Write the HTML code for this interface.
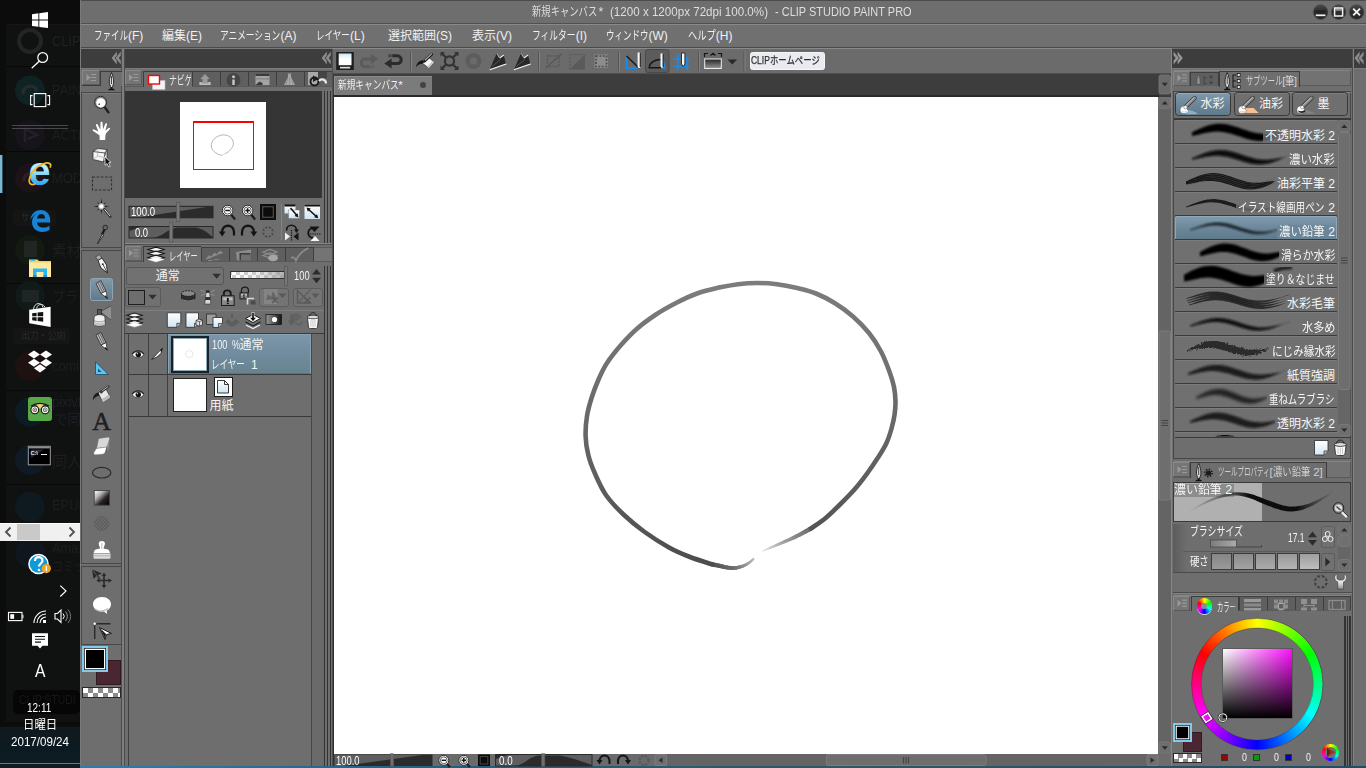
<!DOCTYPE html>
<html lang="ja"><head><meta charset="utf-8"><title>CLIP STUDIO PAINT PRO</title>
<style>
html,body{margin:0;padding:0}
body{width:1366px;height:768px;overflow:hidden;position:relative;background:#6e6e6e;font-family:"Liberation Sans","Noto Sans CJK JP",sans-serif;}
.a{position:absolute;box-sizing:border-box}
.t{white-space:nowrap}
span.j{display:inline-block;white-space:nowrap;transform-origin:0 0;font-family:"Liberation Sans","Noto Sans CJK JP",sans-serif}
svg{overflow:visible}
</style></head>
<body>
<div class="a" style="left:80px;top:0px;width:1286px;height:766px;background:#6e6e6e;"></div>
<div class="a" style="left:80px;top:766px;width:1286px;height:2px;background:linear-gradient(90deg,#2a7fb0,#1d5f80 30%,#2a5a66 60%,#1b4f6a);"></div>
<div class="a" style="left:80px;top:0px;width:1286px;height:1px;background:#4c4c4c;"></div>
<div class="a" style="left:80px;top:23px;width:1286px;height:1px;background:#505050;"></div>
<div class="a" style="left:80px;top:24px;width:1286px;height:1px;background:#8a8a8a;"></div>
<div class="a" style="left:80px;top:25px;width:1286px;height:22px;background:#707070;"></div>
<div class="a" style="left:80px;top:47px;width:1286px;height:1px;background:#4a4a4a;"></div>
<div class="a" style="left:80px;top:0px;width:1px;height:766px;background:#7a7a7a;"></div>
<div class="a" style="left:0px;top:0px;width:80px;height:768px;background:#0c0c0c;"></div>
<div class="a" style="left:6px;top:24px;width:74px;height:698px;background:#101111;"></div>
<div class="a" style="left:0px;top:727px;width:80px;height:41px;background:linear-gradient(180deg,#101a1f,#0c1a22 60%,#0e1c24);"></div>
<div class="a" style="left:6px;top:24px;width:74px;height:1px;background:#171717;"></div>
<div class="a" style="left:6px;top:66px;width:74px;height:1px;background:#080808;"></div>
<div class="a" style="left:6px;top:151px;width:74px;height:1px;background:#080808;"></div>
<div class="a" style="left:6px;top:283px;width:74px;height:1px;background:#080808;"></div>
<div class="a" style="left:6px;top:390px;width:74px;height:1px;background:#080808;"></div>
<div class="a" style="left:6px;top:484px;width:74px;height:1px;background:#080808;"></div>
<svg class="a" style="left:0px;top:0px;" width="80" height="768" viewBox="0 0 80 768"><circle cx="30" cy="41" r="11" fill="none" stroke="#242424" stroke-width="4"/><circle cx="30" cy="90.5" r="15" fill="#0f2224"/><path d="M23 93c0-8 12-9 13-3" fill="none" stroke="#262c2c" stroke-width="3.5" stroke-linecap="round"/><circle cx="30" cy="135" r="15" fill="#17141c"/><path d="M25 142v-13l12 6-9 4" fill="none" stroke="#242228" stroke-width="2.5"/><circle cx="30" cy="178" r="15" fill="#1d1218"/><path d="M24 180c0-8 12-9 13-3" fill="none" stroke="#2a2024" stroke-width="3.5" stroke-linecap="round"/><rect x="13" y="210" width="43" height="16" rx="3" fill="#151515"/><circle cx="30" cy="250" r="15" fill="#121a12"/><rect x="24" y="241" width="13" height="16" fill="#222622"/><circle cx="30" cy="296" r="15" fill="#101a18"/><rect x="22" y="290" width="17" height="12" fill="#1f2424"/><rect x="13" y="328" width="57" height="16" rx="3" fill="#151515"/><circle cx="30" cy="366" r="15" fill="#1e1210"/><circle cx="30" cy="412" r="15" fill="#0c1c22"/><circle cx="30" cy="460" r="15" fill="#101a24"/><circle cx="30" cy="507" r="15" fill="#0f1a20"/><circle cx="30" cy="553" r="15" fill="#10161e"/><rect x="13" y="690" width="67" height="24" rx="5" fill="#060606"/></svg>
<div class="a" style="left:52px;top:33px;width:28px;height:17px;overflow:hidden;"><div class="a t" style="left:0px;top:0px;font-size:15px;line-height:15px;height:15px;color:#1f2225;transform:scaleX(.86);transform-origin:0 0;">CLIP S</div></div>
<div class="a" style="left:52px;top:82px;width:28px;height:17px;overflow:hidden;"><div class="a t" style="left:0px;top:0px;font-size:15px;line-height:15px;height:15px;color:#1e1e1e;transform:scaleX(.86);transform-origin:0 0;">PAINT</div></div>
<div class="a" style="left:52px;top:127px;width:28px;height:17px;overflow:hidden;"><div class="a t" style="left:0px;top:0px;font-size:15px;line-height:15px;height:15px;color:#1e1e20;transform:scaleX(.86);transform-origin:0 0;">ACTIC</div></div>
<div class="a" style="left:52px;top:170px;width:28px;height:17px;overflow:hidden;"><div class="a t" style="left:0px;top:0px;font-size:15px;line-height:15px;height:15px;color:#1f1f1f;transform:scaleX(.86);transform-origin:0 0;">MOD</div></div>
<div class="a" style="left:52px;top:358px;width:28px;height:17px;overflow:hidden;"><div class="a t" style="left:0px;top:0px;font-size:15px;line-height:15px;height:15px;color:#1d1f22;transform:scaleX(.86);transform-origin:0 0;">comic</div></div>
<div class="a" style="left:52px;top:394px;width:28px;height:17px;overflow:hidden;"><div class="a t" style="left:0px;top:0px;font-size:15px;line-height:15px;height:15px;color:#1d2126;transform:scaleX(.86);transform-origin:0 0;">pixivF</div></div>
<div class="a" style="left:52px;top:497px;width:28px;height:17px;overflow:hidden;"><div class="a t" style="left:0px;top:0px;font-size:15px;line-height:15px;height:15px;color:#1e1e1e;transform:scaleX(.86);transform-origin:0 0;">EPUB</div></div>
<div class="a" style="left:52px;top:540px;width:28px;height:17px;overflow:hidden;"><div class="a t" style="left:0px;top:0px;font-size:15px;line-height:15px;height:15px;color:#1e1e1e;transform:scaleX(.86);transform-origin:0 0;">Amaz</div></div>
<div class="a" style="left:19px;top:694px;width:61px;height:14px;overflow:hidden;"><div class="a t" style="left:0px;top:0px;font-size:12px;line-height:12px;height:12px;color:#1a1714;transform:scaleX(.86);transform-origin:0 0;">CLIP  STUDI</div></div>
<div class="a" style="left:52px;top:243px;width:28px;height:17px;overflow:hidden;"><div class="a t" style="left:0px;top:0px;font-size:15px;line-height:15px;height:15px;color:#1e1e1e;"><span class="j" style="width:45px;transform:scaleX(.9607);margin-right:-1.77px">素材を</span></div></div>
<div class="a" style="left:52px;top:289px;width:28px;height:17px;overflow:hidden;"><div class="a t" style="left:0px;top:0px;font-size:15px;line-height:15px;height:15px;color:#1e1e1e;"><span class="j" style="width:45px;transform:scaleX(.8642);margin-right:-6.11px">プラグ</span></div></div>
<div class="a" style="left:21px;top:213px;width:59px;height:12px;overflow:hidden;"><div class="a t" style="left:0px;top:0px;font-size:10px;line-height:10px;height:10px;color:#2a2a2a;"><span class="j" style="width:20px;transform:scaleX(.864);margin-right:-2.72px">サー</span></div></div>
<div class="a" style="left:21px;top:331px;width:59px;height:12px;overflow:hidden;"><div class="a t" style="left:0px;top:0px;font-size:10px;line-height:10px;height:10px;color:#2a2a2a;"><span class="j" style="width:50px;transform:scaleX(.89);margin-right:-5.5px">出力・公開</span></div></div>
<div class="a" style="left:54px;top:412px;width:26px;height:16px;overflow:hidden;"><div class="a t" style="left:0px;top:0px;font-size:14px;line-height:14px;height:14px;color:#1c2024;"><span class="j" style="width:42px;transform:scaleX(.9607);margin-right:-1.65px">で同人</span></div></div>
<div class="a" style="left:52px;top:454px;width:28px;height:17px;overflow:hidden;"><div class="a t" style="left:0px;top:0px;font-size:15px;line-height:15px;height:15px;color:#1e1e1e;"><span class="j">同人誌</span></div></div>
<div class="a" style="left:52px;top:559px;width:28px;height:16px;overflow:hidden;"><div class="a t" style="left:0px;top:0px;font-size:14px;line-height:14px;height:14px;color:#1e1e1e;"><span class="j" style="width:56px;transform:scaleX(.7854);margin-right:-12.02px">コミック</span></div></div>
<svg class="a" style="left:0px;top:0px;" width="80" height="768" viewBox="0 0 80 768"><path fill="#fff" d="M32 14.2 38.4 13.3V19.6H32ZM39.3 13.2 48 12V19.6H39.3ZM32 20.5H38.4V26.8L32 25.9ZM39.3 20.5H48V28.1L39.3 26.9Z"/><circle cx="42.7" cy="57.5" r="4.9" fill="none" stroke="#fff" stroke-width="1.2"/><path d="M39.2 61.2 32.2 67.8" stroke="#fff" stroke-width="1.3" stroke-linecap="round"/><rect x="34.2" y="93.6" width="11.6" height="13" fill="none" stroke="#fff" stroke-width="1.1"/><path d="M32.6 95.6H30.6V104.6H32.6M47.4 95.6H49.6V104.6H47.4" fill="none" stroke="#fff" stroke-width="1.1"/><rect x="12" y="125" width="56" height="1" fill="#4a484c"/><rect x="12" y="128" width="56" height="1" fill="#4a484c"/><rect x="0" y="155" width="2.4" height="38" fill="#76b9d6"/><defs><linearGradient id="ieg" x1="0" y1="0" x2="0" y2="1"><stop offset="0.45" stop-color="#b5ecff"/><stop offset=".72" stop-color="#45b8f5"/><stop offset="1" stop-color="#1579d8"/></linearGradient></defs><text x="28.5" y="185.3" font-family="Liberation Sans,sans-serif" font-weight="bold" font-size="40" fill="url(#ieg)" textLength="22" lengthAdjust="spacingAndGlyphs">e</text><path d="M50.3 167c1.5-3.6-1.8-5-6.8-3.3-6.8 2.3-13.3 9.3-14.2 16-.6 4.6 2.3 5.6 5.6 4.3" fill="none" stroke="#f0b81a" stroke-width="1.7" stroke-linecap="round"/><path fill="#1683d8" d="M30.3 220.3c.6-5.9 4.5-10.3 10.3-10.3 6 0 9.6 4.3 9.6 10.4v2.2H37c.3 3.3 2.8 5 6.2 5 2.3 0 4.5-.7 6.3-1.9v4.3c-2 1.3-4.6 1.9-7.5 1.9-6 0-10-3.8-10-9.8 0-3.8 1.9-6.8 4.8-8.4-2.6.900-5.3 3.3-6.5 6.6ZM37.1 218.5h8c0-2.6-1.3-4.5-3.9-4.5-2.3 0-3.8 1.9-4.1 4.5Z"/><path fill="#f5cf5b" d="M29 259.5h8.5l1.5 1.5H51v16H29Z"/><path fill="#ffe9a0" d="M29 262.5H51V277H29Z"/><rect x="30.3" y="259.8" width="4.5" height="1.3" fill="#3ec1f0"/><path fill="#2bb5f4" d="M33 277v-8.5h14V277h-3.5v-5h-7v5Z"/><path fill="#1b93dd" d="M33 277v-2h3.5v2ZM43.5 277v-2H47v2Z"/><path fill="#fff" d="M29.2 309.8 50.6 306.8V326.9L29.2 323.3Z"/><path d="M33.5 309c1-6.5 8-7.5 9.5-1.5M36.5 308.5c1-5 7-5.5 8.5-1" fill="none" stroke="#ddd" stroke-width="1"/><path fill="#101010" d="M32.2 313.2 36.6 312.7V316.3H32.2ZM37.6 312.6 43.2 311.9V316.3H37.6ZM32.2 317.3H36.6V320.9L32.2 320.3ZM37.6 317.3H43.2V321.8L37.6 321Z"/><path fill="#fff" d="M34 350.6 40 354.6 34 358.6 28 354.6ZM46 350.6 52 354.6 46 358.6 40 354.6ZM34 358.8 40 362.8 34 366.8 28 362.8ZM46 358.8 52 362.8 46 366.8 40 362.8ZM40 364.3 46 368.3 40 372.6 34 368.3Z"/><rect x="28" y="397" width="24" height="24" rx="3" fill="#58a847"/><path fill="#f5d27a" d="M36 404.5c2.5-1 5.5-1 8 0L40 409Z"/><path d="M31 406c5-3.5 13-3.5 18 0" fill="none" stroke="#1a1a1a" stroke-width="1.2"/><circle cx="34.8" cy="409.8" r="3.9" fill="#fff" stroke="#111" stroke-width="1.1"/><circle cx="45.2" cy="409.8" r="3.9" fill="#fff" stroke="#111" stroke-width="1.1"/><circle cx="34.8" cy="409.8" r="1.9" fill="none" stroke="#222" stroke-width=".7"/><circle cx="45.2" cy="409.8" r="1.9" fill="none" stroke="#222" stroke-width=".7"/><circle cx="34.8" cy="409.8" r=".9" fill="#e22"/><circle cx="45.2" cy="409.8" r=".9" fill="#3a3"/><rect x="28.3" y="446.3" width="22" height="18.5" fill="#000" stroke="#9a9a9a" stroke-width="1"/><rect x="28.8" y="446.8" width="21" height="1.6" fill="#8c8c9c"/><path d="M31 449.5 44 449.5 31 458Z" fill="#2a2a2a"/><text x="30.5" y="454.8" font-size="5.5" font-weight="bold" fill="#eee" font-family="Liberation Sans,sans-serif">C:\</text><rect x="41" y="454" width="6" height="1" fill="#eee"/><rect x="0" y="523" width="80" height="18" fill="#f0f0f0"/><rect x="0" y="523" width="80" height="1" fill="#fff"/><rect x="17" y="524" width="23" height="16" fill="#c9c9c9"/><path d="M10.5 527.5 6 532 10.5 536.5M69.5 527.5 74 532 69.5 536.5" fill="none" stroke="#505050" stroke-width="1.8"/><circle cx="38.5" cy="564" r="10.3" fill="#fff"/><circle cx="38.5" cy="564" r="8.8" fill="#0e9bd8"/><path d="M35 561c0-5 7.5-5 7.5-.5 0 3-3.5 3-3.5 6" fill="none" stroke="#fff" stroke-width="2.2"/><circle cx="39" cy="570" r="1.3" fill="#fff"/><circle cx="46.3" cy="568.6" r="4.6" fill="#f2a51c"/><rect x="45.7" y="566" width="1.3" height="5" fill="#fff"/><path d="M60.3 585.6 66 591 60.3 596.5" fill="none" stroke="#fff" stroke-width="1.1"/><rect x="8.5" y="612.4" width="13.5" height="8.2" fill="none" stroke="#fff" stroke-width="1.1"/><rect x="22.4" y="614.8" width="1" height="3.4" fill="#fff"/><rect x="10.3" y="614.2" width="3.8" height="4.6" fill="#fff"/><g fill="none" stroke="#fff" stroke-width="1.1"><path d="M34 623a12 12 0 0 1 12-12"/><path d="M37 623a9 9 0 0 1 9-9" /><path d="M40 623a6 6 0 0 1 6-6"/></g><rect x="43" y="620" width="3" height="3" fill="#fff"/><path d="M55 613.5h2.5l3.5-3.5v12.5l-3.5-3.5H55Z" fill="none" stroke="#fff" stroke-width="1.1"/><g fill="none" stroke-width="1"><path stroke="#fff" d="M63 613.5a4 4 0 0 1 0 5.5"/><path stroke="#999" d="M65.5 611.5a7 7 0 0 1 0 9.5"/><path stroke="#777" d="M68 609.5a10 10 0 0 1 0 13.5"/></g><path fill="#fff" d="M32 633.2H48V645.8H42.5L40 648.6 37.5 645.8H32Z"/><path d="M35 636.5H45M35 639.3H45M35 642.1H41" stroke="#111" stroke-width="1.1"/><rect x="0" y="763" width="80" height="1" fill="#6d7479"/></svg>
<div class="a t" style="left:34.5px;top:661px;font-size:19px;line-height:19px;height:19px;color:#fff;transform:scaleX(.82);transform-origin:0 0;">A</div>
<div class="a t" style="left:27px;top:702px;font-size:12px;line-height:12px;height:12px;color:#fff;transform:scaleX(0.8325);transform-origin:0 0;">12:11</div>
<div class="a t" style="left:0px;top:719px;font-size:12px;line-height:12px;height:12px;color:#fff;width:80px;text-align:center;"><span class="j" style="width:36px;transform:scaleX(.95);margin-right:-1.8px;text-align:left">日曜日</span></div>
<div class="a t" style="left:11px;top:736px;font-size:12px;line-height:12px;height:12px;color:#fff;transform:scaleX(0.9657);transform-origin:0 0;">2017/09/24</div>
<div class="a t" style="left:532px;top:6px;font-size:12px;line-height:12px;height:12px;color:#dedede;"><span class="j" style="width:84px;transform:scaleX(.7763);margin-right:-18.79px">新規キャンバス</span></div>
<div class="a t" style="left:598.5px;top:6px;font-size:12px;line-height:12px;height:12px;color:#dedede;">*</div>
<div class="a t" style="left:609.5px;top:6px;font-size:12px;line-height:12px;height:12px;color:#dedede;transform:scaleX(0.9666);transform-origin:0 0;">(1200 x 1200px 72dpi 100.0%)</div>
<div class="a t" style="left:774.5px;top:6px;font-size:12px;line-height:12px;height:12px;color:#dedede;transform:scaleX(0.9145);transform-origin:0 0;">- CLIP STUDIO PAINT PRO</div>
<svg class="a" style="left:0px;top:0px;" width="1366" height="24" viewBox="0 0 1366 24"><defs><linearGradient id="wb" x1="0" y1="0" x2="0" y2="1"><stop offset="0" stop-color="#4a4a4a"/><stop offset=".45" stop-color="#2e2e2e"/><stop offset="1" stop-color="#262626"/></linearGradient></defs><circle cx="1320.6" cy="12" r="7.4" fill="url(#wb)" stroke="#555" stroke-width=".6"/><circle cx="1338.6" cy="12" r="7.4" fill="url(#wb)" stroke="#555" stroke-width=".6"/><circle cx="1356.6" cy="12" r="7.4" fill="url(#wb)" stroke="#555" stroke-width=".6"/><path d="M1315.8 15.3H1325.4" stroke="#f2f2f2" stroke-width="1.7"/><path d="M1314.5 10.5a6.5 4 0 0 0 12.2 0Z" fill="#1c1c1c" opacity=".6"/><rect x="1334.6" y="8" width="8" height="8" fill="none" stroke="#f2f2f2" stroke-width="1.5"/><rect x="1335.4" y="8.8" width="6.4" height="2" fill="#f2f2f2" opacity=".5"/><path d="M1353.2 8.6 1360 15.4M1360 8.6 1353.2 15.4" stroke="#f2f2f2" stroke-width="1.9"/></svg>
<div class="a t" style="left:94px;top:30px;font-size:12px;line-height:12px;height:12px;color:#f0f0f0;"><span class="j" style="width:48px;transform:scaleX(.7079);margin-right:-14.02px">ファイル</span>(F)</div>
<div class="a t" style="left:162px;top:30px;font-size:12px;line-height:12px;height:12px;color:#f0f0f0;"><span class="j">編集</span>(E)</div>
<div class="a t" style="left:220px;top:30px;font-size:12px;line-height:12px;height:12px;color:#f0f0f0;"><span class="j" style="width:84px;transform:scaleX(.7212);margin-right:-23.42px">アニメーション</span>(A)</div>
<div class="a t" style="left:316px;top:30px;font-size:12px;line-height:12px;height:12px;color:#f0f0f0;"><span class="j" style="width:48px;transform:scaleX(.71);margin-right:-13.92px">レイヤー</span>(L)</div>
<div class="a t" style="left:388px;top:30px;font-size:12px;line-height:12px;height:12px;color:#f0f0f0;"><span class="j">選択範囲</span>(S)</div>
<div class="a t" style="left:472px;top:30px;font-size:12px;line-height:12px;height:12px;color:#f0f0f0;"><span class="j">表示</span>(V)</div>
<div class="a t" style="left:532px;top:30px;font-size:12px;line-height:12px;height:12px;color:#f0f0f0;"><span class="j" style="width:60px;transform:scaleX(.728);margin-right:-16.32px">フィルター</span>(I)</div>
<div class="a t" style="left:606px;top:30px;font-size:12px;line-height:12px;height:12px;color:#f0f0f0;"><span class="j" style="width:60px;transform:scaleX(.7072);margin-right:-17.57px">ウィンドウ</span>(W)</div>
<div class="a t" style="left:688px;top:30px;font-size:12px;line-height:12px;height:12px;color:#f0f0f0;"><span class="j" style="width:36px;transform:scaleX(.7708);margin-right:-8.25px">ヘルプ</span>(H)</div>
<div class="a" style="left:333px;top:48px;width:839px;height:26px;background:#6b6b6b;"></div>
<div class="a" style="left:333px;top:48px;width:839px;height:1px;background:#8a8a8a;"></div>
<div class="a" style="left:332px;top:48px;width:1px;height:26px;background:#8a8a8a;"></div>
<div class="a" style="left:333px;top:73px;width:839px;height:1px;background:#505050;"></div>
<div class="a" style="left:333px;top:74px;width:839px;height:23px;background:#3d3d3d;"></div>
<div class="a" style="left:333px;top:95px;width:826px;height:2px;background:#2a2a2a;"></div>
<div class="a" style="left:333.5px;top:76px;width:98.5px;height:19px;background:#7b7b7b;border-top:1px solid #8c8c8c;border-left:1px solid #8c8c8c;"></div>
<div class="a t" style="left:337.5px;top:79.5px;font-size:11.5px;line-height:11.5px;height:11.5px;color:#f0f0f0;"><span class="j" style="width:80.5px;transform:scaleX(.7544);margin-right:-19.77px">新規キャンバス</span>*</div>
<svg class="a" style="left:0px;top:0px;" width="1366" height="100" viewBox="0 0 1366 100"><circle cx="423" cy="85" r="3" fill="#444"/><rect x="410" y="51" width="1" height="20" fill="#555"/><rect x="411" y="51" width="1" height="20" fill="#828282"/><rect x="538" y="51" width="1" height="20" fill="#555"/><rect x="539" y="51" width="1" height="20" fill="#828282"/><rect x="618" y="51" width="1" height="20" fill="#555"/><rect x="619" y="51" width="1" height="20" fill="#828282"/><rect x="698" y="51" width="1" height="20" fill="#555"/><rect x="699" y="51" width="1" height="20" fill="#828282"/><rect x="743.5" y="51" width="1" height="20" fill="#555"/><rect x="744.5" y="51" width="1" height="20" fill="#828282"/><defs><linearGradient id="nd" x1="0" y1="0" x2="0" y2="1"><stop offset="0" stop-color="#cfe6f7"/><stop offset=".5" stop-color="#fff"/><stop offset="1" stop-color="#fff"/></linearGradient><linearGradient id="gr" x1="0" y1="0" x2="0" y2="1"><stop offset="0" stop-color="#222"/><stop offset="1" stop-color="#999"/></linearGradient></defs><rect x="336.2" y="52" width="17.6" height="18" fill="#1e1e1e"/><rect x="338.7" y="53.5" width="12.8" height="11.7" fill="url(#nd)"/><rect x="340" y="66.8" width="10.2" height="1.7" fill="#ddd"/><path d="M391 63.6H397.3a3.9 3.9 0 0 0 0-7.8H392.5" fill="none" stroke="#2b2b2b" stroke-width="3"/><path d="M384.3 63.6 391.6 58.6V68.6Z" fill="#2b2b2b"/><path d="M388.6 55.8h4" stroke="#2b2b2b" stroke-width="3" stroke-dasharray="1 .8"/><g transform="rotate(180 381.25 61.3)"><path d="M391 63.6H397.3a3.9 3.9 0 0 0 0-7.8H392.5" fill="none" stroke="#5b5b5b" stroke-width="3"/><path d="M384.3 63.6 391.6 58.6V68.6Z" fill="#5b5b5b"/><path d="M388.6 55.8h4" stroke="#5b5b5b" stroke-width="3" stroke-dasharray="1 .8"/></g><path d="M421 62 427.6 56.3 434.2 62.3 428.8 68.2Z" fill="#f6f6f6" stroke="#2a2a2a" stroke-width=".7"/><path d="M428.8 68.2 434.2 62.3 432.6 60.8 427.3 66.7Z" fill="#c8c8c8"/><path d="M422.5 60.2c-3.3.6-6.3 3-6.3 6.8 1.3-2.2 3.5-3.3 6.5-3.6l2.3-2.2Z" fill="#161616"/><path d="M424.5 61.3 431.8 54.3" stroke="#1e1e1e" stroke-width="2.6" stroke-linecap="round"/><path d="M425.3 60 431.6 54" stroke="#f2f2f2" stroke-width="1" stroke-linecap="round"/><g fill="none" stroke="#333" stroke-width="2.2"><circle cx="449.5" cy="61" r="4.6"/><path d="M441.5 53 446 57.5M457.5 53 453 57.5M441.5 69 446 64.5M457.5 69 453 64.5"/></g><path d="M440.5 52h4.5l-4.5 4.5ZM458.5 52v4.5L454 52ZM440.5 70v-4.5l4.5 4.5ZM458.5 70H454l4.5-4.5Z" fill="#333"/><circle cx="473.5" cy="61" r="5.8" fill="none" stroke="#5d5d5d" stroke-width="4.4"/><g transform="translate(0 0)"><path d="M489.8 69.2 496.8 53 499.2 57.6 503.6 54.6 505.9 63.6Z" fill="#282828"/><path d="M489.6 69.8 506.3 63.9" stroke="#f6f6f6" stroke-width="1.1"/><path d="M499.6 57.9 503.8 55" stroke="#f0f0f0" stroke-width="1.2"/><path d="M496.9 53.3 499.2 57.6" stroke="#e0e0e0" stroke-width=".7"/><path d="M492 66.5 500.5 59.5" stroke="#6a6a6a" stroke-width=".7"/></g><g transform="translate(24.3 0)"><path d="M489.8 69.2 496.8 53 499.2 57.6 503.6 54.6 505.9 63.6Z" fill="#282828"/><path d="M489.6 69.8 506.3 63.9" stroke="#f6f6f6" stroke-width="1.1"/><path d="M499.6 57.9 503.8 55" stroke="#f0f0f0" stroke-width="1.2"/><path d="M496.9 53.3 499.2 57.6" stroke="#e0e0e0" stroke-width=".7"/><path d="M492 66.5 500.5 59.5" stroke="#6a6a6a" stroke-width=".7"/></g><rect x="547.5" y="56" width="11.5" height="10.5" fill="none" stroke="#575757" stroke-width="1.3" stroke-dasharray="2 1.3"/><path d="M545.5 68 562 53.5" stroke="#575757" stroke-width="1.3"/><path d="M585 54v15.5h-15Z" fill="#5a5a5a"/><path d="M570 69.5V54.5h14" fill="none" stroke="#585858" stroke-width="1" stroke-dasharray="2 1.3"/><path d="M569 70 586 53.5" stroke="#626262" stroke-width=".8"/><rect x="594.5" y="54.5" width="13.5" height="13.5" fill="#8c8c8c"/><rect x="596" y="56" width="10.5" height="10.5" fill="none" stroke="#4c4c4c" stroke-width="1.7" stroke-dasharray="1.9 1.5"/><path d="M626.5 69V56.5" stroke="#1c8ce8" stroke-width="1.5"/><path d="M626 68.3H639" stroke="#1c8ce8" stroke-width="1.5"/><path d="M626.5 56 639.5 68.5" stroke="#1a1a1a" stroke-width="1.5"/><path d="M638.7 52.5V66.5l1 1.5" fill="none" stroke="#f8f8f8" stroke-width="2.2"/><path d="M640.3 53V67" stroke="#222" stroke-width=".9"/><rect x="645.5" y="49.5" width="23.5" height="23" rx="2.5" fill="#5c5c5c" stroke="#4a4a4a" stroke-width="1"/><path d="M661 59.5c-7 0-11.5 3.5-11.8 8.2H662" fill="none" stroke="#161616" stroke-width="1.4"/><path d="M661.5 60c2.5 1.5 3.5 4.5 3.5 8h-4" fill="none" stroke="#1c8ce8" stroke-width="1.3"/><path d="M661.6 53.5V66l.8 1.5" fill="none" stroke="#f8f8f8" stroke-width="2.2"/><path d="M663.2 54V67" stroke="#222" stroke-width=".9"/><path d="M673.5 59h16M673.5 66.5h16M678 54v16M687 56v14" stroke="#1c8ce8" stroke-width="1.5"/><path d="M681.5 53h3.4v11l-1.7 2.5-1.7-2.5Z" fill="#f8f8f8" stroke="#222" stroke-width=".9"/><rect x="704.7" y="59" width="16.6" height="9.5" fill="url(#gr)" stroke="#eee" stroke-width="1"/><path d="M704.5 57V53.5h3.5M718 53.5h3.5V57M710.5 55.5 713 53.2 715.5 55.5" fill="none" stroke="#161616" stroke-width="1.2"/><path d="M727.5 59.5h9.6l-4.8 5Z" fill="#2a2a2a"/></svg>
<div class="a" style="left:749.5px;top:51.5px;width:75.5px;height:18.5px;background:#e9ebf0;border-radius:2.5px;border:1px solid #f6f6f6;"></div>
<div class="a t" style="left:751.2px;top:55px;font-size:10.5px;line-height:10.5px;height:10.5px;color:#2e2e2e;-webkit-text-stroke:.25px #2e2e2e;transform:scaleX(0.8054);transform-origin:0 0;">CLIP</div>
<div class="a t" style="left:770.3px;top:55px;font-size:10.5px;line-height:10.5px;height:10.5px;color:#2e2e2e;"><span class="j" style="width:63px;transform:scaleX(.7967);margin-right:-12.81px;-webkit-text-stroke:.25px #2e2e2e">ホームページ</span></div>
<div class="a" style="left:334px;top:97px;width:824px;height:656.5px;background:#fff;"></div>
<div class="a" style="left:333px;top:97px;width:1px;height:669px;background:#2e2e2e;"></div>
<svg class="a" style="left:334px;top:97px;" width="824" height="656" viewBox="334 97 824 656"><defs><linearGradient id="cg" gradientUnits="userSpaceOnUse" x1="0" y1="281" x2="0" y2="568"><stop offset="0" stop-color="#7c7c7c"/><stop offset=".35" stop-color="#6e6e6e"/><stop offset=".7" stop-color="#5e5e5e"/><stop offset="1" stop-color="#4c4c4c"/></linearGradient><filter id="cb" x="-5%" y="-5%" width="110%" height="110%"><feGaussianBlur stdDeviation=".6"/></filter></defs><g fill="none" stroke-linecap="round" stroke-linejoin="round" filter="url(#cb)"><path d="M753.5 559L752.7 559.7" stroke="rgb(187,187,187)" stroke-width="2.06"/><path d="M752.7 559.7L751.6 560.7" stroke="rgb(182,182,182)" stroke-width="2.19"/><path d="M751.6 560.7L750.3 561.8" stroke="rgb(176,176,176)" stroke-width="2.33"/><path d="M750.3 561.8L748.9 562.9" stroke="rgb(171,171,171)" stroke-width="2.46"/><path d="M748.9 562.9L747.5 563.8" stroke="rgb(165,165,165)" stroke-width="2.58"/><path d="M747.5 563.8L746.1 564.6" stroke="rgb(160,160,160)" stroke-width="2.71"/><path d="M746.1 564.6L744.7 565.3" stroke="rgb(154,154,154)" stroke-width="2.84"/><path d="M744.7 565.3L743.2 566" stroke="rgb(149,149,149)" stroke-width="2.97"/><path d="M743.2 566L741.7 566.5" stroke="rgb(143,143,143)" stroke-width="3.1"/><path d="M741.7 566.5L740 567" stroke="rgb(138,138,138)" stroke-width="3.23"/><path d="M740 567L738.4 567.4" stroke="rgb(132,132,132)" stroke-width="3.36"/><path d="M738.4 567.4L736.8 567.8" stroke="rgb(127,127,127)" stroke-width="3.49"/><path d="M736.8 567.8L735 568" stroke="rgb(121,121,121)" stroke-width="3.62"/><path d="M735 568L733 568.1" stroke="rgb(116,116,116)" stroke-width="3.75"/><path d="M733 568.1L730.5 568" stroke="rgb(110,110,110)" stroke-width="3.88"/><path d="M730.5 568L727.1 567.5" stroke="rgb(105,105,105)" stroke-width="4.01"/><path d="M727.1 567.5L722.9 566.7" stroke="rgb(99,99,99)" stroke-width="4.14"/><path d="M722.9 566.7L718.5 565.7" stroke="rgb(94,94,94)" stroke-width="4.27"/><path d="M718.5 565.7L714.7 564.9" stroke="rgb(88,88,88)" stroke-width="4.4"/><path d="M714.7 564.9L712 564.3" stroke="rgb(83,83,83)" stroke-width="4.54"/><path d="M811 528.5L809 529.6" stroke="rgb(103,103,103)" stroke-width="4.51"/><path d="M809 529.6L806.1 531.2" stroke="rgb(110,110,110)" stroke-width="4.34"/><path d="M806.1 531.2L802.7 533" stroke="rgb(116,116,116)" stroke-width="4.17"/><path d="M802.7 533L799.2 534.9" stroke="rgb(123,123,123)" stroke-width="4"/><path d="M799.2 534.9L796 536.5" stroke="rgb(130,130,130)" stroke-width="3.83"/><path d="M796 536.5L792.9 538" stroke="rgb(136,136,136)" stroke-width="3.66"/><path d="M792.9 538L789.8 539.4" stroke="rgb(143,143,143)" stroke-width="3.5"/><path d="M789.8 539.4L786.6 540.8" stroke="rgb(150,150,150)" stroke-width="3.32"/><path d="M786.6 540.8L783.7 542" stroke="rgb(156,156,156)" stroke-width="3.15"/><path d="M783.7 542L781 543.2" stroke="rgb(163,163,163)" stroke-width="2.98"/><path d="M781 543.2L778.6 544.2" stroke="rgb(169,169,169)" stroke-width="2.81"/><path d="M778.6 544.2L776.5 545.1" stroke="rgb(176,176,176)" stroke-width="2.65"/><path d="M776.5 545.1L774.6 546" stroke="rgb(182,182,182)" stroke-width="2.48"/><path d="M774.6 546L772.8 546.7" stroke="rgb(189,189,189)" stroke-width="2.3"/><path d="M772.8 546.7L771 547.5" stroke="rgb(196,196,196)" stroke-width="2.14"/><path d="M771 547.5L769.1 548.3" stroke="rgb(202,202,202)" stroke-width="1.96"/><path d="M769.1 548.3L767.3 549.1" stroke="rgb(209,209,209)" stroke-width="1.8"/><path d="M767.3 549.1L765.5 549.9" stroke="rgb(216,216,216)" stroke-width="1.62"/><path d="M765.5 549.9L764.1 550.5" stroke="rgb(222,222,222)" stroke-width="1.46"/><path d="M764.1 550.5L763 551" stroke="rgb(229,229,229)" stroke-width="1.29"/><path d="M712 564.3C708.3 563.1 697.2 559.8 690 557C682.8 554.2 676.7 551.8 669 547.5C661.3 543.2 651.6 537 644 531.5C636.4 526 629.8 520.5 623.5 514.5C617.2 508.5 611 502.1 606.3 495.5C601.6 488.9 598.5 481.6 595.5 474.8C592.5 468.1 589.9 461.5 588.3 455C586.6 448.5 585.8 442.5 585.6 436C585.4 429.5 586 422.4 587 416C588 409.6 589.8 403.5 591.7 397.5C593.6 391.5 595.8 385.8 598.3 380C600.8 374.2 603.2 368.8 607 363C610.8 357.2 616 350.7 621 345C626 339.3 631.2 333.8 637 328.7C642.8 323.6 649.5 318.8 656 314.5C662.5 310.2 669.2 306.5 676 303C682.8 299.5 689.8 296.1 697 293.5C704.2 290.9 712.2 289.2 719 287.6C725.8 286.1 731.6 285 738 284.2C744.4 283.4 751.1 283 757.6 283C764.1 283 770.6 283.4 777 284.2C783.4 285 789.5 286.2 796 287.8C802.5 289.4 809.5 290.9 816 293.5C822.5 296.1 828.8 299.4 835 303.2C841.2 307 847.3 311.5 853 316.5C858.7 321.5 864.3 327.2 869 333C873.7 338.8 877.6 345.1 881 351.5C884.4 357.9 887.3 365.8 889.5 371.7C891.7 377.6 893 382 894 387C895 392 895.4 397 895.5 401.7C895.6 406.4 895.1 410.7 894.5 415C893.9 419.3 893.1 422.8 891.8 427.5C890.5 432.2 888.8 438 886.5 443C884.2 448 881.2 452.6 878 457.6C874.8 462.6 871.2 468 867.5 473C863.8 478 860.4 482.6 856 487.7C851.6 492.8 846 498.5 841 503.5C836 508.5 831 513.5 826 517.7C821 521.9 813.5 526.7 811 528.5" stroke="url(#cg)" stroke-width="4.6"/></g></svg>
<div class="a" style="left:334px;top:753.5px;width:838px;height:12.5px;background:#6a6a6a;"></div>
<svg class="a" style="left:0px;top:0px;" width="1366" height="768" viewBox="0 0 1366 768"><rect x="334.5" y="754.5" width="98" height="11.5" fill="#2b2b2b"/><path d="M335 755H422L343 766H335Z" fill="#5e5e5e"/><rect x="390.3" y="753.8" width="3.4" height="12.4" fill="#6e6e6e" stroke="#555" stroke-width=".6"/><path d="M447.1 764 449.8 767" stroke="#1c1c1c" stroke-width="2"/><circle cx="443.8" cy="760.3" r="5" fill="#fff" stroke="#2a2a2a" stroke-width="1"/><circle cx="443.8" cy="760.3" r="3.4" fill="none" stroke="#333" stroke-width=".8"/><path d="M441.6 760.3h4.4" stroke="#111" stroke-width="1.5"/><path d="M467.1 764 469.8 767" stroke="#1c1c1c" stroke-width="2"/><circle cx="463.8" cy="760.3" r="5" fill="#fff" stroke="#2a2a2a" stroke-width="1"/><circle cx="463.8" cy="760.3" r="3.4" fill="none" stroke="#333" stroke-width=".8"/><path d="M461.6 760.3h4.4" stroke="#111" stroke-width="1.5"/><path d="M463.8 758.1v4.4" stroke="#111" stroke-width="1.5"/><rect x="478" y="754.5" width="12" height="11.5" fill="#0c0c0c"/><rect x="480.2" y="756.5" width="7.6" height="7.6" fill="none" stroke="#444" stroke-width="1"/><rect x="495.5" y="754.5" width="96.5" height="11.5" fill="#5e5e5e"/><path d="M512 766c14 0 16-10.5 28-10.5h20c10 1.5 22 6 32 9.5v1Z" fill="#2b2b2b"/><path d="M496 755 508 755 496 759Z" fill="#2b2b2b"/><rect x="495.5" y="754.5" width="96.5" height="11.5" fill="none" stroke="#2b2b2b" stroke-width="1"/><rect x="541.5" y="753.8" width="3.4" height="12.4" fill="#6e6e6e" stroke="#555" stroke-width=".6"/><path d="M599.5 762.5c0-8 10-8 10 0v2.5" fill="none" stroke="#141414" stroke-width="2" transform="translate(0 -1)"/><path d="M596.5 760h6l-3 4.5Z" fill="#141414"/><path d="M628 762.5c0-8-10-8-10 0v2.5" fill="none" stroke="#141414" stroke-width="2" transform="translate(0 -1)"/><path d="M625 760h6l-3 4.5Z" fill="#141414"/><circle cx="644" cy="760.5" r="4.5" fill="none" stroke="#575757" stroke-width="2" stroke-dasharray="2.2 1.4"/><rect x="655" y="754.5" width="11.5" height="11" rx="1.5" fill="#707070" stroke="#808080" stroke-width=".8"/><path d="M662.5 757.5v5.5l-4-2.75Z" fill="#2c2c2c"/><rect x="667" y="754" width="480" height="12" fill="#646464"/><rect x="826.5" y="754.5" width="159.5" height="11" rx="2" fill="#6e6e6e" stroke="#7c7c7c" stroke-width="1"/><path d="M903.5 757v6.5M906 757v6.5M908.5 757v6.5" stroke="#444" stroke-width="1.1"/><rect x="1147" y="754.5" width="11" height="11" rx="1.5" fill="#707070" stroke="#808080" stroke-width=".8"/><path d="M1150.5 757.5v5.5l4-2.75Z" fill="#2c2c2c"/><rect x="1158.5" y="97" width="12.5" height="656" fill="#646464"/><rect x="1159" y="75" width="11.5" height="19" rx="2" fill="#6a6a6a" stroke="#7a7a7a" stroke-width=".8"/><path d="M1161.8 82.8h6l-3 3.4Z" fill="#2a2a2a"/><rect x="1159" y="97.8" width="11.5" height="10.5" rx="2" fill="#6e6e6e" stroke="#7c7c7c" stroke-width=".8"/><path d="M1161.8 104.5h6l-3-3.4Z" fill="#2a2a2a"/><rect x="1159" y="742" width="11.5" height="11" rx="2" fill="#6e6e6e" stroke="#7c7c7c" stroke-width=".8"/><path d="M1161.8 746.3h6l-3 3.4Z" fill="#2a2a2a"/><rect x="1159" y="331" width="11.5" height="169" rx="2" fill="#6e6e6e" stroke="#7c7c7c" stroke-width="1"/><path d="M1161.5 420.5h6.5M1161.5 423h6.5M1161.5 425.5h6.5" stroke="#444" stroke-width="1.1"/><rect x="1159" y="753.5" width="12" height="12.5" fill="#6c6c6c"/></svg>
<div class="a t" style="left:336px;top:754.5px;font-size:12px;line-height:12px;height:12px;color:#fff;transform:scaleX(0.7826);transform-origin:0 0;">100.0</div>
<div class="a t" style="left:498.7px;top:754.5px;font-size:12px;line-height:12px;height:12px;color:#fff;transform:scaleX(0.8153);transform-origin:0 0;">0.0</div>
<div class="a" style="left:81px;top:48px;width:251px;height:1px;background:#7a7a7a;"></div>
<div class="a" style="left:81px;top:49px;width:251px;height:19px;background:#3d3d3d;"></div>
<div class="a" style="left:81px;top:68px;width:251px;height:1px;background:#7c7c7c;"></div>
<div class="a" style="left:121px;top:49px;width:1px;height:717px;background:#4c4c4c;"></div>
<div class="a" style="left:122px;top:49px;width:2px;height:717px;background:#7e7e7e;"></div>
<div class="a" style="left:124px;top:49px;width:1px;height:717px;background:#4c4c4c;"></div>
<div class="a" style="left:82px;top:70px;width:17.5px;height:15px;background:#757575;border:1px solid #5a5a5a;border-top-color:#888;border-left-color:#888;"></div>
<div class="a" style="left:99.5px;top:71px;width:22px;height:14.5px;background:#6e6e6e;border-top:1px solid #3c3c3c;border-left:1px solid #3c3c3c;"></div>
<div class="a" style="left:82px;top:85px;width:18px;height:1px;background:#3c3c3c;"></div>
<div class="a" style="left:81px;top:91.5px;width:40.5px;height:156.5px;border:1px solid #474747;border-right:none;"></div>
<div class="a" style="left:81px;top:250px;width:40.5px;height:313.5px;border:1px solid #474747;border-right:none;"></div>
<div class="a" style="left:81px;top:565.5px;width:40.5px;height:79px;border:1px solid #474747;border-right:none;"></div>
<div class="a" style="left:82px;top:92.5px;width:39px;height:1px;background:#7a7a7a;"></div>
<div class="a" style="left:89.5px;top:277.5px;width:23.5px;height:23.5px;background:linear-gradient(180deg,#8099a9,#617b8c);border-radius:2.5px;border:1px solid #8ea5b3;"></div>
<div class="a" style="left:95.5px;top:659.5px;width:25.5px;height:25.5px;background:#4a2632;border:1px solid #2e1a20;"></div>
<div class="a" style="left:82px;top:646px;width:26px;height:26px;background:#000;border:2.3px solid #84c8ea;box-shadow:inset 0 0 0 .8px #222,inset 0 0 0 2px #fff;"></div>
<div class="a" style="left:82px;top:686.5px;width:39px;height:11px;background:#fff;border:1px solid #2a2a2a;background:repeating-conic-gradient(#8a8a8a 0 25%,#fff 0 50%) 0 0/10px 10px;"></div>
<div class="a" style="left:124.5px;top:70px;width:17.5px;height:15px;background:#757575;border:1px solid #5a5a5a;border-top-color:#888;border-left-color:#888;"></div>
<div class="a" style="left:124.5px;top:85.5px;width:207.5px;height:1px;background:#595959;"></div>
<div class="a" style="left:142.5px;top:71px;width:49px;height:15.5px;background:#6e6e6e;border-top:1px solid #3c3c3c;border-left:1px solid #3c3c3c;"></div>
<div class="a" style="left:191.5px;top:71px;width:29px;height:14.5px;background:#5f5f5f;border:1px solid #3e3e3e;border-bottom:none;"></div>
<div class="a" style="left:219.5px;top:71px;width:29px;height:14.5px;background:#5f5f5f;border:1px solid #3e3e3e;border-bottom:none;"></div>
<div class="a" style="left:247.5px;top:71px;width:29px;height:14.5px;background:#5f5f5f;border:1px solid #3e3e3e;border-bottom:none;"></div>
<div class="a" style="left:275.5px;top:71px;width:29px;height:14.5px;background:#5f5f5f;border:1px solid #3e3e3e;border-bottom:none;"></div>
<div class="a" style="left:303.5px;top:71px;width:29px;height:14.5px;background:#5f5f5f;border:1px solid #3e3e3e;border-bottom:none;"></div>
<div class="a" style="left:183px;top:74px;width:8px;height:14px;background:linear-gradient(90deg,rgba(110,110,110,0),#6e6e6e);"></div>
<div class="a" style="left:124.5px;top:91px;width:197.5px;height:107px;background:#353535;"></div>
<div class="a" style="left:180px;top:102px;width:86px;height:86px;background:#fff;"></div>
<div class="a" style="left:193px;top:121.2px;width:61.3px;height:49px;border:1.4px solid #f00;border-top-width:2px;"></div>
<div class="a" style="left:323.5px;top:91px;width:1.5px;height:152px;background:#333;"></div>
<div class="a" style="left:326.5px;top:91px;width:1.5px;height:152px;background:#333;"></div>
<div class="a" style="left:329.5px;top:91px;width:1.5px;height:152px;background:#333;"></div>
<div class="a" style="left:323.5px;top:266px;width:1.5px;height:500px;background:#333;"></div>
<div class="a" style="left:326.5px;top:266px;width:1.5px;height:500px;background:#333;"></div>
<div class="a" style="left:329.5px;top:266px;width:1.5px;height:500px;background:#333;"></div>
<div class="a" style="left:331.5px;top:49px;width:1px;height:717px;background:#505050;"></div>
<div class="a" style="left:124.5px;top:243px;width:207.5px;height:1px;background:#848484;"></div>
<div class="a" style="left:124.5px;top:244px;width:207.5px;height:1px;background:#505050;"></div>
<div class="a" style="left:124.5px;top:245.5px;width:17.5px;height:15px;background:#757575;border:1px solid #5a5a5a;border-top-color:#888;border-left-color:#888;"></div>
<div class="a" style="left:124.5px;top:260.5px;width:207.5px;height:1px;background:#595959;"></div>
<div class="a" style="left:142.5px;top:246px;width:58px;height:15.5px;background:#6e6e6e;border-top:1px solid #3c3c3c;border-left:1px solid #3c3c3c;"></div>
<div class="a" style="left:200.5px;top:246.5px;width:29px;height:14px;background:#5f5f5f;border:1px solid #3e3e3e;border-bottom:none;"></div>
<div class="a" style="left:228.5px;top:246.5px;width:29px;height:14px;background:#5f5f5f;border:1px solid #3e3e3e;border-bottom:none;"></div>
<div class="a" style="left:256.5px;top:246.5px;width:29px;height:14px;background:#5f5f5f;border:1px solid #3e3e3e;border-bottom:none;"></div>
<div class="a" style="left:284.5px;top:246.5px;width:29px;height:14px;background:#5f5f5f;border:1px solid #3e3e3e;border-bottom:none;"></div>
<div class="a" style="left:313.5px;top:246.5px;width:18px;height:14px;background:#747474;border-top:1px solid #5a5a5a;"></div>
<div class="a" style="left:125.5px;top:266.5px;width:98px;height:18.8px;background:#717171;border:1px solid #565656;border-radius:3px;"></div>
<div class="a" style="left:230px;top:271.3px;width:55px;height:8.2px;border:1px solid #333;background:linear-gradient(90deg,rgba(150,150,150,0) 0%,rgba(150,150,150,.15) 50%,rgba(150,150,150,.75) 100%),repeating-conic-gradient(#d0d0d0 0 25%,#fff 0 50%) 1px 0/8px 6.2px;"></div>
<div class="a" style="left:124.5px;top:287.3px;width:36px;height:19.3px;background:#717171;border:1px solid #5a5a5a;border-radius:2.5px;"></div>
<div class="a" style="left:127.5px;top:289.5px;width:17.5px;height:15.3px;background:#6e6e6e;border:1.2px solid #1c1c1c;"></div>
<div class="a" style="left:259px;top:287.5px;width:30px;height:19px;background:#747474;border:1px solid #5c5c5c;border-radius:3px;"></div>
<div class="a" style="left:292.5px;top:287.5px;width:30px;height:19px;background:#747474;border:1px solid #5c5c5c;border-radius:3px;"></div>
<div class="a" style="left:124.5px;top:309.5px;width:199px;height:1px;background:#7e7e7e;"></div>
<div class="a" style="left:124.5px;top:333px;width:199px;height:1px;background:#3a3a3a;"></div>
<div class="a" style="left:128px;top:333px;width:1px;height:433px;background:#3f3f3f;"></div>
<div class="a" style="left:310.5px;top:333px;width:1px;height:433px;background:#474747;"></div>
<div class="a" style="left:311.5px;top:334px;width:12px;height:432px;background:#6a6a6a;"></div>
<div class="a" style="left:148px;top:334px;width:1px;height:82px;background:#3f3f3f;"></div>
<div class="a" style="left:166.5px;top:334px;width:1px;height:82px;background:#3f3f3f;"></div>
<div class="a" style="left:128px;top:374px;width:183px;height:1px;background:#3a3a3a;"></div>
<div class="a" style="left:128px;top:415.5px;width:183px;height:1px;background:#3a3a3a;"></div>
<div class="a" style="left:167.5px;top:334px;width:143px;height:40px;background:linear-gradient(180deg,#7b96a8,#6f8a9c 60%,#68838f);border:1px solid #8aa3b3;border-bottom-color:#5a7382;"></div>
<div class="a" style="left:171px;top:335.8px;width:38px;height:37px;background:#fff;border:2px solid #18222a;box-shadow:inset 0 0 0 1px #8fa8b8;"></div>
<div class="a" style="left:172.7px;top:377.7px;width:34.5px;height:34px;background:#fff;border:1px solid #222;"></div>
<div class="a" style="left:213.5px;top:377px;width:19.5px;height:19.5px;background:#fff;border:1.2px solid #1a1a1a;"></div>
<svg class="a" style="left:0px;top:0px;" width="340" height="768" viewBox="0 0 340 768"><path d="M116.8 51.5 111.6 58 116.8 64.5 116.8 60.6 114.7 58 116.8 55.4Z" fill="#8a8a8a"/><path d="M120.8 51.5 115.6 58 120.8 64.5 120.8 60.6 118.7 58 120.8 55.4Z" fill="#8a8a8a"/><path d="M326.8 51.5 321.6 58 326.8 64.5 326.8 60.6 324.7 58 326.8 55.4Z" fill="#8a8a8a"/><path d="M330.8 51.5 325.6 58 330.8 64.5 330.8 60.6 328.7 58 330.8 55.4Z" fill="#8a8a8a"/><path d="M86.5 74 90.5 77.5 86.5 81Z" fill="#999"/><path d="M91 74.5h5M91 77.5h5M91 80.5h5" stroke="#999" stroke-width="1.2"/><path d="M111.5 72.5c-1.3 3-2.2 6.5-2.2 9.5 0 2 .9 4 1.6 5.5h1.2c.7-1.5 1.6-3.5 1.6-5.5 0-3-.9-6.5-2.2-9.5Z" fill="#ddd" stroke="#1c1c1c" stroke-width=".9"/><path d="M111.5 76v8" stroke="#444" stroke-width="1"/><path d="M110.5 87.2h2v1.8h-2Z" fill="#1a1a1a"/><path d="M108 90.2h7l-1.2-1.4h-4.6Z" fill="#111"/><circle cx="100.6" cy="102.3" r="6" fill="#8c8c8c" stroke="#2c2c2c" stroke-width="1"/><circle cx="100.8" cy="102.8" r="4.6" fill="#fff"/><path d="M99.8 103.2 97.8 104.3 100 105Z" fill="#222"/><path d="M104.6 107 109 113.2" stroke="#1e1e1e" stroke-width="2.3"/><path d="M99.6 140v-4.5c-2-1.500-4.500-3.300-6.500-4.500-1-.8-.2-2 .9-1.600l4.300 2.100-2.300-6.200c-.4-1.200 1.200-1.800 1.700-.7l2.600 5.200.2-7.200c0-1.300 1.900-1.300 2 0l.5 7 2.300-5.800c.5-1.100 2.100-.5 1.700.7l-1.700 6.200 3.300-2.800c1-.7 2 .5 1.200 1.300l-3.900 4.300c-.5 1.500-.7 4.500-.7 6.500Z" fill="#fff"/><path d="M93 151.5 97.5 148.5 107 149.500 105 153 93 151.500V159.500L103.500 162 105 153M103.500 162 107 158V149.500" fill="#f4f4f4" stroke="#333" stroke-width=".8" stroke-linejoin="round"/><path d="M97.5 148.5V156L93 159.500M97.5 156 107 158" fill="none" stroke="#999" stroke-width=".6"/><path d="M104.8 156.8 105.2 165.3 107 163.5 108.8 167 110.2 166.3 108.6 162.8 111 162.3Z" fill="#111" stroke="#fff" stroke-width=".7"/><rect x="92.5" y="177" width="19" height="13" fill="none" stroke="#303030" stroke-width="1.1" stroke-dasharray="2.6 1.6"/><path d="M101.4 198.2 102.3 204.3 105.8 202 103.500 205.500 109.600 206.400 103.500 207.300 105.800 210.800 102.300 208.500 101.400 214.600 100.500 208.500 97 210.800 99.300 207.300 93.200 206.400 99.300 205.500 97 202 100.500 204.300Z" fill="#1e1e1e"/><circle cx="101.4" cy="206.4" r="3.3" fill="#9a9a9a"/><circle cx="101.4" cy="206.4" r="2.2" fill="#fff"/><path d="M104.3 209.3 110.5 216.7" stroke="#2a2a2a" stroke-width="2.4" stroke-linecap="round"/><path d="M104.5 209.3 110.3 216.2" stroke="#eee" stroke-width="1"/><circle cx="105.3" cy="227.5" r="2.3" fill="#666" stroke="#1c1c1c" stroke-width=".8"/><path d="M104.5 229.5 102 234.5" stroke="#1c1c1c" stroke-width="2.4"/><path d="M102.3 234 97.3 244 103.8 235Z" fill="#ccc" stroke="#1c1c1c" stroke-width=".8"/><path d="M95.5 257 99.5 254.5 102 258 98 260.5Z" fill="#aaa" stroke="#333" stroke-width=".7"/><path d="M98 260.5 102 258 106.5 265 107.5 273 101 268Z" fill="#f2f2f2" stroke="#222" stroke-width=".9"/><path d="M107.2 272.5 103 264.5" stroke="#222" stroke-width=".8"/><circle cx="102.8" cy="264.2" r=".9" fill="#222"/><g transform="translate(0 0)"><path d="M96 283.5 100.8 280.5 106 291 101 293.5Z" fill="#b8b8b8" stroke="#2a2a2a" stroke-width=".8"/><path d="M97.8 282.3 102.8 292.5M99.6 281.3 104.5 291.7" stroke="#444" stroke-width=".7"/><path d="M101 293.5 106 291 107.3 298.3Z" fill="#fff" stroke="#222" stroke-width=".7"/><path d="M105.6 295.8 107.3 298.3 104.9 296.3Z" fill="#111" stroke="#111" stroke-width=".8"/></g><g transform="translate(0 51.7)"><path d="M96 283.5 100.8 280.5 106 291 101 293.5Z" fill="#b8b8b8" stroke="#2a2a2a" stroke-width=".8"/><path d="M97.8 282.3 102.8 292.5M99.6 281.3 104.5 291.7" stroke="#444" stroke-width=".7"/><path d="M101 293.5 106 291 107.3 298.3Z" fill="#fff" stroke="#222" stroke-width=".7"/><path d="M105.6 295.8 107.3 298.3 104.9 296.3Z" fill="#111" stroke="#111" stroke-width=".8"/></g><path d="M100.5 311.5 111 306V320Z" fill="#999" opacity=".8"/><path d="M100.5 311.5 111 306M100.5 312 111 320" stroke="#333" stroke-width=".6"/><rect x="97.5" y="309.5" width="4" height="5.5" fill="#555" stroke="#222" stroke-width=".7"/><path d="M94 318c0-4.5 11-4.5 11 0v6.5c0 2-11 2-11 0Z" fill="#f0f0f0" stroke="#333" stroke-width=".7"/><path d="M94 320.5c2 1.8 9 1.8 11 0" fill="none" stroke="#888" stroke-width=".8"/><path d="M94.3 322v2.5c1.5 1.5 9 1.5 10.5 0V322c-2 1.5-8.5 1.5-10.5 0Z" fill="#c4c4c4"/><path d="M95.5 361.8V374.5H108.3Z" fill="#5cc4f2" stroke="#1e4a66" stroke-width=".8"/><path d="M98 368.5v3.5h3.6Z" fill="#24506a"/><path d="M98 393 105.5 388 110.5 397.5 103 402.5Z" fill="#e8e8e8" stroke="#333" stroke-width=".8"/><path d="M103 402.5 110.5 397.5 109 394.5 101.5 399.5Z" fill="#bbb"/><path d="M98.5 392.5c-3 .5-6 3.5-5.5 7.5 1.5-2.5 4-4 6.5-4.5Z" fill="#1a1a1a"/><path d="M101 392 108.5 386.5" stroke="#2a2a2a" stroke-width="2.2" stroke-linecap="round"/><path d="M101.8 391.2 108.3 386.4" stroke="#eee" stroke-width=".8"/><circle cx="101.3" cy="392.2" r="1.3" fill="#444"/><path d="M98.5 438.5 108 437c1.5 0 2 1 1.5 2.5L107 447 96.5 448.5Z" fill="#d8d8d8" stroke="#666" stroke-width=".6"/><path d="M96.5 448.5 107 447 105.5 452.5c-.3 1-1.2 1.5-2 1.6l-8 .6c-1.5 0-2-1-1.5-2.5Z" fill="#fff" stroke="#888" stroke-width=".5"/><path d="M107 447 109.5 439.5 108 452Z" fill="#999"/><path d="M103.5 454 105.5 452.5 107 447" fill="none" stroke="#444" stroke-width=".8"/><ellipse cx="101.7" cy="472.7" rx="9.2" ry="5.3" fill="none" stroke="#2a2a2a" stroke-width="1.2"/><defs><linearGradient id="tg" x1="0" y1="0" x2="1" y2="1"><stop offset="0" stop-color="#fff"/><stop offset=".3" stop-color="#bbb"/><stop offset=".62" stop-color="#2a2222"/><stop offset="1" stop-color="#000"/></linearGradient></defs><rect x="94.2" y="490.5" width="15.3" height="14.7" fill="url(#tg)" stroke="#444" stroke-width=".9"/><defs><clipPath id="hc"><circle cx="101.7" cy="523.5" r="7.8"/></clipPath></defs><g clip-path="url(#hc)" stroke="#5c5c5c" stroke-width="1" opacity=".9"><path d="M85 515 101 532M118 515 102 532"/><path d="M88.3 515 104.3 532M114.7 515 98.7 532"/><path d="M91.6 515 107.6 532M111.4 515 95.4 532"/><path d="M94.9 515 110.9 532M108.1 515 92.1 532"/><path d="M98.2 515 114.2 532M104.8 515 88.8 532"/><path d="M101.5 515 117.5 532M101.5 515 85.5 532"/><path d="M104.8 515 120.8 532M98.2 515 82.2 532"/><path d="M108.1 515 124.1 532M94.9 515 78.9 532"/><path d="M111.4 515 127.4 532M91.6 515 75.6 532"/><path d="M114.7 515 130.7 532M88.3 515 72.3 532"/></g><path d="M100 548.5c0-2-1.3-3-1.3-5 0-3.3 6.3-3.3 6.3 0 0 2-1.3 3-1.3 5l4.3 1c1 .3 1.5 1.5 2 3.5h-16.3c.5-2 1-3.2 2-3.5Z" fill="#fff"/><path d="M93.5 553.5h17v4c0 .8-.5 1.2-1.2 1.2H94.7c-.7 0-1.2-.4-1.2-1.2Z" fill="#dcdcdc"/><path d="M93.5 555.8h17" stroke="#aaa" stroke-width=".8"/><path d="M101.8 543v6" stroke="#bbb" stroke-width="1"/><path d="M92 569.2 102 573.5 98 575 100.5 579 98.8 580 96.5 576 93.5 579Z" fill="#2a2a2a"/><path d="M92 569.2 100 580" stroke="#888" stroke-width=".5"/><path d="M104 572.5 106.3 576H104.8V579.7H108.5V578.2L112 580.5 108.5 582.8V581.3H104.8V585H106.3L104 588.5 101.7 585H103.2V581.3H99.5V582.8L96.5 580.5 99.5 578.2V579.7H103.2V576H101.7Z" fill="#2a2a2a"/><path d="M102 597c5.5 0 9 3.3 9 7.3 0 2.8-1.7 5.2-4.3 6.5l.3 3.2-3-2.5c-.7.1-1.3.1-2 .1-5.5 0-9-3.3-9-7.3s3.5-7.3 9-7.3Z" fill="#fff"/><path d="M95 609c3 2.5 9 3 13-.5" fill="none" stroke="#bbb" stroke-width="1.2"/><path d="M94.7 624V639M95 623.7H110.5" stroke="#2a2a2a" stroke-width="1.4"/><circle cx="94.7" cy="623.7" r="1.6" fill="#fff" stroke="#333" stroke-width=".5"/><path d="M99.5 627.5 111.5 633.5 106.5 634.5 105 639.5Z" fill="#fff" stroke="#1a1a1a" stroke-width="1"/><path d="M100.5 628.5 105 638.5 106 634Z" fill="#1a1a1a"/><path d="M129 74 133 77.5 129 81Z" fill="#999"/><path d="M133.5 74.5h5M133.5 77.5h5M133.5 80.5h5" stroke="#999" stroke-width="1.2"/><rect x="152.5" y="80.5" width="12.5" height="9" fill="#f4f4f4" stroke="#bbb" stroke-width=".6"/><rect x="148.5" y="75.5" width="11" height="8.5" fill="#fff" stroke="#f00" stroke-width="1.4"/><path d="M199.5 85V82h3v-3h-2.2l4.7-5 4.7 5H207.5v3h3v3Z" fill="#9a9a9a"/><path d="M199.5 85v-3h2v1.5h7V82h2v3Z" fill="#bcbcbc"/><circle cx="233.5" cy="80" r="7" fill="#464646"/><circle cx="233.5" cy="76.8" r="1.5" fill="#c8c8c8"/><path d="M232.3 79.5h2.4V85h-2.4Z" fill="#c8c8c8"/><rect x="255.5" y="73.5" width="14" height="11.5" fill="#a4a4a4"/><rect x="255.5" y="73.5" width="14" height="2.5" fill="#3a3a3a"/><path d="M255.5 85l4-3.5 3 1.5v2Z" fill="#3a3a3a"/><path d="M255.5 79c4-2 9 2 14-1" stroke="#8a8a8a" stroke-width="1.5" fill="none"/><path d="M288 73.5h3v3.5l4 8H284l4-8Z" fill="#a8a8a8"/><path d="M289.5 77v8M287.5 79l-1.5 6M291.5 79l1.5 6" stroke="#8a8a8a" stroke-width=".7"/><rect x="287.7" y="73.2" width="3.6" height="1.3" fill="#888"/><rect x="308" y="72" width="10" height="13" fill="#a9a9a9"/><rect x="318" y="72" width="9" height="6" fill="#444"/><path d="M313 75.5 318.5 79 313 82Z" fill="#222"/><circle cx="314.5" cy="81.5" r="4" fill="none" stroke="#1c1c1c" stroke-width="2"/><path d="M319 81c2-2.5 7-2 7 2.5" fill="none" stroke="#e8e8e8" stroke-width="2.2"/><path d="M223.3 154.6C223.1 154.7 222.8 155.1 222.3 155.2C221.8 155.3 221.2 155.2 220.3 155C219.5 154.8 218.3 154.4 217.3 153.8C216.2 153.2 214.9 152.3 214 151.5C213.1 150.6 212.4 149.5 212 148.6C211.5 147.7 211.3 146.8 211.3 145.8C211.2 144.9 211.5 144 211.7 143.1C212 142.2 212.3 141.4 212.8 140.6C213.4 139.8 214.1 138.9 215 138.2C215.8 137.5 216.8 136.8 217.8 136.3C218.7 135.8 219.9 135.5 220.8 135.2C221.8 135 222.7 134.9 223.6 134.9C224.5 134.9 225.4 135 226.3 135.2C227.3 135.5 228.3 135.8 229.1 136.3C230 136.9 230.9 137.7 231.6 138.5C232.2 139.3 232.7 140.4 233 141.2C233.3 142.1 233.4 142.7 233.4 143.4C233.5 144.1 233.4 144.6 233.2 145.2C233 145.9 232.6 146.7 232.2 147.4C231.8 148.1 231.2 148.8 230.6 149.5C230 150.3 229.2 151.1 228.5 151.7C227.8 152.3 227 152.7 226.3 153C225.7 153.4 224.8 153.7 224.5 153.8" fill="none" stroke="#8c8c8c" stroke-width=".65"/><rect x="129" y="206.3" width="84" height="11.5" fill="#2b2b2b"/><path d="M129.5 206.8H208L138 217.5H129.5Z" fill="#5e5e5e"/><rect x="129" y="206.3" width="84" height="11.5" fill="none" stroke="#282828" stroke-width="1"/><rect x="129" y="226.5" width="84" height="11.5" fill="#5e5e5e"/><path d="M150 238c14 0 16-10.5 30-10.5h16c8 1.5 12 6 17 9.5v1Z" fill="#2b2b2b"/><path d="M129.5 227 140 227 129.5 231Z" fill="#2b2b2b"/><rect x="129" y="226.5" width="84" height="11.5" fill="none" stroke="#282828" stroke-width="1"/><rect x="176.5" y="202.5" width="3.3" height="19" fill="#777" stroke="#555" stroke-width=".7"/><rect x="169.5" y="222.5" width="3.3" height="19.5" fill="#777" stroke="#555" stroke-width=".7"/><path d="M231.1 214.5 235.1 219.5" stroke="#1c1c1c" stroke-width="2.2"/><circle cx="227.6" cy="210.5" r="5.3" fill="#fff" stroke="#2a2a2a" stroke-width="1"/><circle cx="227.6" cy="210.5" r="3.6" fill="none" stroke="#333" stroke-width=".8"/><path d="M225.29999999999998 210.5h4.6" stroke="#111" stroke-width="1.5"/><path d="M251.1 214.5 255.1 219.5" stroke="#1c1c1c" stroke-width="2.2"/><circle cx="247.6" cy="210.5" r="5.3" fill="#fff" stroke="#2a2a2a" stroke-width="1"/><circle cx="247.6" cy="210.5" r="3.6" fill="none" stroke="#333" stroke-width=".8"/><path d="M245.29999999999998 210.5h4.6" stroke="#111" stroke-width="1.5"/><path d="M247.6 208.2v4.6" stroke="#111" stroke-width="1.5"/><rect x="260" y="204" width="16" height="16" fill="#0c0c0c"/><rect x="262.7" y="206.7" width="10.6" height="10.6" fill="none" stroke="#4c4c4c" stroke-width="1.2"/><rect x="281" y="204" width="1" height="36" fill="#848484"/><defs><linearGradient id="wg" x1="0" y1="0" x2="0" y2="1"><stop offset="0" stop-color="#fff"/><stop offset="1" stop-color="#cfe4f2"/></linearGradient></defs><rect x="284.5" y="205" width="11" height="8.5" fill="url(#wg)"/><rect x="284.5" y="204.5" width="11" height="2" fill="#111"/><rect x="288.5" y="210" width="11" height="8.5" fill="url(#wg)" stroke="#666" stroke-width=".4"/><path d="M290.5 208 297 215.5" stroke="#111" stroke-width="1.5"/><path d="M298.5 217.5 294.5 216 297.5 213.3Z" fill="#111"/><rect x="304.5" y="204.5" width="15.5" height="14.5" fill="url(#wg)"/><rect x="304.5" y="204.5" width="15.5" height="2" fill="#111"/><path d="M308 209 316.5 216.5" stroke="#111" stroke-width="1.6"/><path d="M306.5 207.5 310.8 208.6 307.8 211.6ZM318.3 218.3 314 217.3 317 214.3Z" fill="#111"/><path d="M222 233.5c0-9 12-9 12 0v3" fill="none" stroke="#141414" stroke-width="2.3" transform="translate(0 -1)"/><path d="M218.8 231.5h6.8l-3.4 5Z" fill="#141414"/><path d="M254 233.5c0-9-12-9-12 0v3" fill="none" stroke="#141414" stroke-width="2.3" transform="translate(0 -1)"/><path d="M250.4 231.5h6.8l-3.4 5Z" fill="#141414"/><path d="M273.7 233.2 272.2 236 271.2 233ZM271.2 236.8 268.2 237.8 269.6 235ZM266.8 237.7 264 236.2 267 235.2ZM263.2 235.2 262.2 232.2 265 233.6ZM262.3 230.8 263.8 228 264.8 231ZM264.8 227.2 267.8 226.2 266.4 229ZM269.2 226.3 272 227.8 269 228.8ZM272.8 228.8 273.8 231.8 271 230.4Z" fill="#484848"/><path d="M286.5 232c0-7 10-7 10 0" fill="none" stroke="#141414" stroke-width="1.7" transform="translate(0 -1.5)"/><path d="M294 229.5h5l-2.5 3.5Z" fill="#141414"/><path d="M291.5 230v11" stroke="#141414" stroke-width="1.2" stroke-dasharray="1.3 1"/><path d="M285 232.5v8l5-4Z" fill="#e8f2fa"/><path d="M298.5 232.5v8l-5-4Z" fill="#141414"/><path d="M313.5 238c-7 0-7-10 0-10" fill="none" stroke="#141414" stroke-width="1.9"/><path d="M309.5 226.5h10l-5 5.5Z" fill="#141414"/><path d="M310 234h11" stroke="#141414" stroke-width="1.2" stroke-dasharray="1.3 1"/><path d="M310.5 241h9l-4.5-5Z" fill="#f4f8fc"/><path d="M129 249.5 133 253 129 256.5Z" fill="#999"/><path d="M133.5 250h5M133.5 253h5M133.5 256h5" stroke="#999" stroke-width="1.2"/><path d="M148 249.5 156 247.1 164 249.5 156 251.9Z" fill="#f4f4f4" stroke="#1a1a1a" stroke-width="1.1"/><path d="M148 253.5 156 251.1 164 253.5 156 255.9Z" fill="#f4f4f4" stroke="#1a1a1a" stroke-width="1.1"/><path d="M148 257.5 156 255.1 164 257.5 156 259.9Z" fill="#f4f4f4" stroke="#1a1a1a" stroke-width="1.1"/><path d="M148 259.5 156 257.1 164 259.5 156 261.9Z" fill="#fff" stroke="#ddd" stroke-width=".5"/><path d="M206 259 209 255.5 211.5 257.5ZM211 257 214.5 253 217 255ZM216.5 254.5 220 251 222.5 253ZM208 260.5h5M214 259.5h5" fill="#8a8a8a" stroke="#8a8a8a" stroke-width=".8"/><path d="M236 252 251 249.5V260.5H237Z" fill="#8c8c8c"/><rect x="239.5" y="253" width="11" height="7.5" fill="#3c3c3c"/><rect x="241" y="254.5" width="9.5" height="6" fill="#707070"/><path d="M263 252 270 249.5 277 252 270 254.5ZM263 255.5 270 253 277 255.5 270 258Z" fill="none" stroke="#8c8c8c" stroke-width="1.2"/><ellipse cx="273" cy="258" rx="5" ry="3.3" fill="#a6a6a6"/><path d="M291 257.5c3-.5 4.5 1 5 3 2-5 6-9.5 12.5-12.5" fill="none" stroke="#8a8a8a" stroke-width="1.8"/><path d="M212.3 273.7h8.6l-4.3 5Z" fill="#303030"/><rect x="284.6" y="266.2" width="3" height="19.3" fill="#777" stroke="#555" stroke-width=".7"/><path d="M312 274.5 316.5 269 321 274.5ZM312 277.7H321L316.5 283.2Z" fill="#2c2c2c"/><path d="M148.3 294.8h8.4l-4.2 4.8Z" fill="#303030"/><path d="M181.5 293.5v4.5c0 4 13.5 4 13.5 0v-4.5" fill="#2e2e2e" stroke="#1c1c1c" stroke-width=".8"/><ellipse cx="188.2" cy="293.5" rx="6.8" ry="2.8" fill="#888" stroke="#1a1a1a" stroke-width=".9" stroke-dasharray="2 .9"/><path d="M182.5 299.5c2.5 2 9 2 11.5 0" stroke="#bbb" stroke-width=".7" fill="none"/><path d="M206 292.5h3.6l1.2 11.5h-6Z" fill="#d8d8d8" stroke="#333" stroke-width=".6"/><path d="M205.3 297h5l.3 3h-5.6Z" fill="#333"/><path d="M206 290.5h3.6v2H206Z" fill="#222"/><path d="M205 292 200.5 290M205 294 201 295.5M210.5 292 215 290M210.5 294 214.5 295.5" stroke="#aaa" stroke-width=".6"/><path d="M223.8 296.25v-2.5c0-4.5 7-4.5 7 0V296.25" fill="none" stroke="#1c1c1c" stroke-width="1.9549999999999998"/><rect x="221.5" y="295.79" width="12.649999999999999" height="9.66" fill="#888" stroke="#1a1a1a" stroke-width="1"/><rect x="223.225" y="297.4" width="9.2" height="2.875" fill="#bdbdbd"/><rect x="226.905" y="297.975" width="1.8399999999999999" height="3.9099999999999997" fill="#111"/><rect x="226.905" y="302.69" width="1.8399999999999999" height="1.4949999999999999" fill="#111"/><path d="M241.44 293.1v-2.5c0-4.5 7-4.5 7 0V293.1" fill="none" stroke="#1c1c1c" stroke-width="1.224"/><rect x="240" y="292.812" width="7.92" height="6.048" fill="#888" stroke="#1a1a1a" stroke-width="1"/><rect x="241.08" y="293.82" width="5.76" height="1.7999999999999998" fill="#bdbdbd"/><rect x="243.384" y="294.18" width="1.152" height="2.448" fill="#111"/><rect x="243.384" y="297.132" width="1.152" height="0.9359999999999999" fill="#111"/><path d="M247.5 304.5v-6h6.5" fill="none" stroke="#d8d8d8" stroke-width="1.6"/><rect x="250.5" y="300.5" width="5" height="4" fill="#4c4c4c"/><rect x="264" y="289" width="13.5" height="15" fill="#848484"/><path d="M266 300 268 294 271 297 273 291 277 299Z" fill="#666"/><path d="M272 297.5l6 5.5M278 297.5l-6 5.5" stroke="#5a5a5a" stroke-width="1.6"/><path d="M278.5 293.5h8l-4 4.5Z" fill="#585858"/><path d="M297.5 290.5V303H310Z" fill="none" stroke="#5a5a5a" stroke-width="1.5"/><path d="M297 304 311 289" stroke="#606060" stroke-width="1.2"/><path d="M304.5 297.5l6 5.5M310.5 297.5l-6 5.5" stroke="#5a5a5a" stroke-width="1.6"/><path d="M311.5 293.5h8l-4 4.5Z" fill="#585858"/><path d="M126.9 315.25 134.5 312.97 142.1 315.25 134.5 317.53Z" fill="#f4f4f4" stroke="#1a1a1a" stroke-width="1.045"/><path d="M126.9 319.05 134.5 316.77000000000004 142.1 319.05 134.5 321.33Z" fill="#f4f4f4" stroke="#1a1a1a" stroke-width="1.045"/><path d="M126.9 322.85 134.5 320.57000000000005 142.1 322.85 134.5 325.13Z" fill="#f4f4f4" stroke="#1a1a1a" stroke-width="1.045"/><path d="M126.9 324.75 134.5 322.47 142.1 324.75 134.5 327.03Z" fill="#fff" stroke="#ddd" stroke-width=".5"/><path d="M167.3 312.8h13.5v10.5l-4 4h-9.5Z" fill="url(#wg)" stroke="#2a2a2a" stroke-width=".8"/><path d="M180.8 323.3h-4v4" fill="#bbb" stroke="#2a2a2a" stroke-width=".7"/><path d="M186 312.8h12.5v10.5l-4 4h-8.5Z" fill="url(#wg)" stroke="#2a2a2a" stroke-width=".8"/><path d="M198.5 323.3h-4v4" fill="#bbb" stroke="#2a2a2a" stroke-width=".7"/><path d="M196 320.5l3-1.5 3.5 1.2v4.5l-3 1.5-3.5-1.2Z" fill="#ddd" stroke="#222" stroke-width=".7"/><path d="M196 320.5l3.5 1.2 3-1.5M199.5 321.7v4.5" fill="none" stroke="#222" stroke-width=".6"/><path d="M206.5 314h9.5v10.5h-9.5Z" fill="#9c9c9c" stroke="#2a2a2a" stroke-width=".8"/><path d="M213 317.5h9.5v6l-4 4h-5.5Z" fill="url(#wg)" stroke="#2a2a2a" stroke-width=".8"/><path d="M222.5 323.5h-4v4" fill="#bbb" stroke="#2a2a2a" stroke-width=".7"/><path d="M233 313.5v5.5h2.5l-3.5 3.5-3.5-3.5h2.5v-5.5ZM225.5 321 232 325 239 321 232 318" fill="#5a5a5a" opacity=".9"/><path d="M225.5 322 232 326 239 322" fill="none" stroke="#5a5a5a" stroke-width="1.2"/><path d="M245.5 318.5 253 314.5 260.5 318.5 253 322.5Z" fill="#fff" stroke="#1a1a1a" stroke-width="1"/><path d="M245.5 322 253 326 260.5 322" fill="none" stroke="#1a1a1a" stroke-width="1.1"/><path d="M246 325 253 328.5 260 325" fill="none" stroke="#eee" stroke-width="1.3"/><path d="M251.8 312.5h2.4v5h2.3l-3.5 4-3.5-4h2.3Z" fill="#111" stroke="#fff" stroke-width=".6"/><defs><linearGradient id="mk" x1="0" y1="0" x2="1" y2="0"><stop offset="0" stop-color="#999"/><stop offset="1" stop-color="#111"/></linearGradient></defs><rect x="266" y="314.5" width="15.5" height="10" fill="url(#mk)" stroke="#1c1c1c" stroke-width=".8"/><circle cx="274.5" cy="319.5" r="2.6" fill="#fff"/><path d="M290.5 314.5 297 313 302 317 296 321 290.5 319.5Z" fill="#626262"/><path d="M288 320.5h2.5v-6h2v6H295l-3.5 5Z" fill="#5e5e5e"/><path d="M294 322l5 3 4-3" fill="none" stroke="#5e5e5e" stroke-width="1.3"/><path d="M307.5 317.5h11l-1 9.5c-.2 1-1 1.5-2 1.5h-5c-1 0-1.8-.5-2-1.5Z" fill="#fff" stroke="#222" stroke-width=".8"/><ellipse cx="313" cy="317" rx="5.8" ry="1.8" fill="#ddd" stroke="#222" stroke-width=".8"/><path d="M309.5 316c.5-4.5 6.5-4.5 7 0" fill="none" stroke="#222" stroke-width=".9"/><path d="M311 320v7M313 320v7.5M315 320v7" stroke="#aaa" stroke-width=".7"/><path d="M132.2 354.8c2.5-4.3 9.1-4.3 11.6 0-2.5 3.9-9.1 3.9-11.6 0Z" fill="#f4f4f4" stroke="#2a2a2a" stroke-width=".7"/><circle cx="138.3" cy="354.6" r="2.7" fill="#111"/><circle cx="137.4" cy="353.6" r=".8" fill="#ccc"/><path d="M132.2 354c2.5-4.3 9.1-4.3 11.6 0" fill="none" stroke="#222" stroke-width="1.1"/><path d="M132.2 394.8c2.5-4.3 9.1-4.3 11.6 0-2.5 3.9-9.1 3.9-11.6 0Z" fill="#f4f4f4" stroke="#2a2a2a" stroke-width=".7"/><circle cx="138.3" cy="394.6" r="2.7" fill="#111"/><circle cx="137.4" cy="393.6" r=".8" fill="#ccc"/><path d="M132.2 394c2.5-4.3 9.1-4.3 11.6 0" fill="none" stroke="#222" stroke-width="1.1"/><path d="M151.5 359.5 160 350.5 162.5 348 161 353.5 157 357Z" fill="#f2f2f2" stroke="#1a1a1a" stroke-width=".8"/><path d="M160 350.5 162.5 348 161.5 352Z" fill="#111"/><ellipse cx="189.3" cy="354" rx="3.8" ry="3.5" fill="none" stroke="#ddd" stroke-width=".7"/><path d="M217.5 380.5h7l4 4v8.5h-11Z" fill="url(#wg)" stroke="#222" stroke-width=".9"/><path d="M224.5 380.5v4h4" fill="none" stroke="#222" stroke-width=".9"/></svg>
<div class="a t" style="left:92.3px;top:408.5px;font-size:26px;line-height:26px;height:26px;color:#1e1e1e;font-family:'Liberation Serif',serif;-webkit-text-stroke:.5px #1e1e1e;">A</div>
<div class="a" style="left:169px;top:74px;width:22px;height:14px;overflow:hidden;"><div class="a t" style="left:0px;top:1px;font-size:12px;line-height:12px;height:12px;color:#e8e8e8;"><span class="j" style="width:36px;transform:scaleX(.655);margin-right:-12.42px">ナビゲ</span></div></div>
<div class="a t" style="left:131.4px;top:206px;font-size:12.5px;line-height:12.5px;height:12.5px;color:#fff;transform:scaleX(0.7704);transform-origin:0 0;">100.0</div>
<div class="a t" style="left:134.5px;top:226.5px;font-size:12.5px;line-height:12.5px;height:12.5px;color:#fff;transform:scaleX(0.7539);transform-origin:0 0;">0.0</div>
<div class="a t" style="left:168.5px;top:250.5px;font-size:12px;line-height:12px;height:12px;color:#ececec;"><span class="j" style="width:48px;transform:scaleX(.6035);margin-right:-19.03px">レイヤー</span></div>
<div class="a t" style="left:155.7px;top:269.5px;font-size:12px;line-height:12px;height:12px;color:#f0f0f0;"><span class="j">通常</span></div>
<div class="a t" style="left:293.9px;top:269.7px;font-size:12px;line-height:12px;height:12px;color:#f4f4f4;transform:scaleX(0.7792);transform-origin:0 0;">100</div>
<div class="a t" style="left:211.5px;top:338.7px;font-size:12px;line-height:12px;height:12px;color:#f4f4f4;transform:scaleX(0.7742);transform-origin:0 0;">100</div>
<div class="a t" style="left:231.5px;top:338.7px;font-size:12px;line-height:12px;height:12px;color:#f4f4f4;transform:scaleX(0.7498);transform-origin:0 0;">%</div>
<div class="a t" style="left:239.5px;top:338.7px;font-size:12px;line-height:12px;height:12px;color:#f4f4f4;"><span class="j">通常</span></div>
<div class="a t" style="left:210.5px;top:359px;font-size:12px;line-height:12px;height:12px;color:#f4f4f4;"><span class="j" style="width:48px;transform:scaleX(.71);margin-right:-13.92px">レイヤー</span></div>
<div class="a t" style="left:251px;top:359px;font-size:12px;line-height:12px;height:12px;color:#f4f4f4;">1</div>
<div class="a t" style="left:209.5px;top:400px;font-size:12px;line-height:12px;height:12px;color:#f4f4f4;"><span class="j">用紙</span></div>
<div class="a" style="left:1171px;top:48px;width:1px;height:718px;background:#868686;"></div>
<div class="a" style="left:1172px;top:49px;width:180px;height:18.5px;background:#3d3d3d;"></div>
<div class="a" style="left:1172px;top:67.5px;width:180px;height:1px;background:#7c7c7c;"></div>
<div class="a" style="left:1351.5px;top:49px;width:1px;height:717px;background:#4c4c4c;"></div>
<div class="a" style="left:1352.5px;top:49px;width:1px;height:717px;background:#828282;"></div>
<div class="a" style="left:1353.5px;top:49px;width:12.5px;height:18.5px;background:#3d3d3d;"></div>
<div class="a" style="left:1353.5px;top:67.5px;width:12.5px;height:1px;background:#7c7c7c;"></div>
<div class="a" style="left:1172.5px;top:69.5px;width:178.5px;height:16.5px;background:#727272;border:1px solid #5a5a5a;border-top-color:#858585;"></div>
<div class="a" style="left:1173px;top:70.5px;width:17px;height:15px;background:#757575;border:1px solid #5a5a5a;border-top-color:#888;border-left-color:#888;"></div>
<div class="a" style="left:1190px;top:71.5px;width:29px;height:14px;background:#5f5f5f;border:1px solid #3e3e3e;border-bottom:none;"></div>
<div class="a" style="left:1218.5px;top:71px;width:81.5px;height:15.5px;background:#6e6e6e;border:1px solid #3c3c3c;border-bottom:none;"></div>
<div class="a" style="left:1172.5px;top:90.5px;width:178.5px;height:368px;border:1px solid #474747;"></div>
<div class="a" style="left:1173.5px;top:91.5px;width:177px;height:1px;background:#7e7e7e;"></div>
<div class="a" style="left:1175.3px;top:92.3px;width:56px;height:24px;background:linear-gradient(180deg,#7f9aac,#6b8698 55%,#5f7a8b);border:1px solid #383838;border-radius:3.5px;box-shadow:inset 0 1px 0 #93abba;"></div>
<div class="a" style="left:1233.5px;top:92.3px;width:56px;height:24px;background:#6f6f6f;border:1px solid #383838;border-radius:3.5px;box-shadow:inset 0 1px 0 #7e7e7e;"></div>
<div class="a" style="left:1292.1px;top:92.3px;width:56px;height:24px;background:#6f6f6f;border:1px solid #383838;border-radius:3.5px;box-shadow:inset 0 1px 0 #7e7e7e;"></div>
<div class="a" style="left:1173.5px;top:118px;width:177px;height:1.5px;background:#383838;"></div>
<div class="a" style="left:1175px;top:120px;width:162px;height:23px;background:#707070;border-top:1px solid #7b7b7b;"></div>
<div class="a" style="left:1175px;top:143px;width:162px;height:1px;background:#3a3a3a;"></div>
<div class="a" style="left:1175px;top:144px;width:162px;height:23px;background:#707070;border-top:1px solid #7b7b7b;"></div>
<div class="a" style="left:1175px;top:167px;width:162px;height:1px;background:#3a3a3a;"></div>
<div class="a" style="left:1175px;top:168px;width:162px;height:23px;background:#707070;border-top:1px solid #7b7b7b;"></div>
<div class="a" style="left:1175px;top:191px;width:162px;height:1px;background:#3a3a3a;"></div>
<div class="a" style="left:1175px;top:192px;width:162px;height:23px;background:#707070;border-top:1px solid #7b7b7b;"></div>
<div class="a" style="left:1175px;top:215px;width:162px;height:1px;background:#3a3a3a;"></div>
<div class="a" style="left:1175px;top:215.5px;width:162px;height:24px;background:linear-gradient(180deg,#7f9aac,#6b8698 55%,#5f7a8b);border:1px solid #8fa9b9;border-radius:2px;"></div>
<div class="a" style="left:1175px;top:239px;width:162px;height:1px;background:#3a3a3a;"></div>
<div class="a" style="left:1175px;top:240px;width:162px;height:23px;background:#707070;border-top:1px solid #7b7b7b;"></div>
<div class="a" style="left:1175px;top:263px;width:162px;height:1px;background:#3a3a3a;"></div>
<div class="a" style="left:1175px;top:264px;width:162px;height:23px;background:#707070;border-top:1px solid #7b7b7b;"></div>
<div class="a" style="left:1175px;top:287px;width:162px;height:1px;background:#3a3a3a;"></div>
<div class="a" style="left:1175px;top:288px;width:162px;height:23px;background:#707070;border-top:1px solid #7b7b7b;"></div>
<div class="a" style="left:1175px;top:311px;width:162px;height:1px;background:#3a3a3a;"></div>
<div class="a" style="left:1175px;top:312px;width:162px;height:23px;background:#707070;border-top:1px solid #7b7b7b;"></div>
<div class="a" style="left:1175px;top:335px;width:162px;height:1px;background:#3a3a3a;"></div>
<div class="a" style="left:1175px;top:336px;width:162px;height:23px;background:#707070;border-top:1px solid #7b7b7b;"></div>
<div class="a" style="left:1175px;top:359px;width:162px;height:1px;background:#3a3a3a;"></div>
<div class="a" style="left:1175px;top:360px;width:162px;height:23px;background:#707070;border-top:1px solid #7b7b7b;"></div>
<div class="a" style="left:1175px;top:383px;width:162px;height:1px;background:#3a3a3a;"></div>
<div class="a" style="left:1175px;top:384px;width:162px;height:23px;background:#707070;border-top:1px solid #7b7b7b;"></div>
<div class="a" style="left:1175px;top:407px;width:162px;height:1px;background:#3a3a3a;"></div>
<div class="a" style="left:1175px;top:408px;width:162px;height:23px;background:#707070;border-top:1px solid #7b7b7b;"></div>
<div class="a" style="left:1175px;top:431px;width:162px;height:1px;background:#3a3a3a;"></div>
<div class="a" style="left:1175px;top:432px;width:162px;height:4.5px;background:#707070;border-top:1px solid #7b7b7b;"></div>
<div class="a" style="left:1174.5px;top:436.5px;width:176px;height:1.5px;background:#3a3a3a;"></div>
<div class="a" style="left:1172.5px;top:461px;width:178.5px;height:16.5px;background:#727272;border:1px solid #5a5a5a;border-top-color:#858585;"></div>
<div class="a" style="left:1173px;top:462px;width:17px;height:15px;background:#757575;border:1px solid #5a5a5a;border-top-color:#888;border-left-color:#888;"></div>
<div class="a" style="left:1190px;top:462px;width:137px;height:16px;background:#6e6e6e;border:1px solid #3c3c3c;border-bottom:none;"></div>
<div class="a" style="left:1172.5px;top:482px;width:178.5px;height:40px;background:#6e6e6e;border:1px solid #3a3a3a;border-width:1px 1px 1.5px 1px;"></div>
<div class="a" style="left:1173.5px;top:483px;width:88px;height:38px;background:#b0b0b0;"></div>
<div class="a" style="left:1173.5px;top:484px;width:60.5px;height:12.5px;background:rgba(105,105,105,.5);"></div>
<div class="a" style="left:1173px;top:523.5px;width:165px;height:48px;background:linear-gradient(90deg,#5c5c5c,#6e6e6e 14px);"></div>
<div class="a" style="left:1320.5px;top:525.5px;width:14.5px;height:22.5px;background:#717171;border:1px solid #5c5c5c;border-radius:2.5px;"></div>
<div class="a" style="left:1183px;top:551px;width:135.5px;height:1px;background:#5a5a5a;"></div>
<div class="a" style="left:1211px;top:553.2px;width:20.5px;height:17.3px;background:linear-gradient(180deg,rgb(134,134,134),rgb(154,154,154));border:1px solid #3c3c3c;"></div>
<div class="a" style="left:1233px;top:553.2px;width:20.5px;height:17.3px;background:linear-gradient(180deg,rgb(140,140,140),rgb(163,163,163));border:1px solid #3c3c3c;"></div>
<div class="a" style="left:1255px;top:553.2px;width:20.5px;height:17.3px;background:linear-gradient(180deg,rgb(146,146,146),rgb(172,172,172));border:1px solid #3c3c3c;"></div>
<div class="a" style="left:1277px;top:553.2px;width:20.5px;height:17.3px;background:linear-gradient(180deg,rgb(152,152,152),rgb(181,181,181));border:1px solid #3c3c3c;"></div>
<div class="a" style="left:1299px;top:553.2px;width:20.5px;height:17.3px;background:linear-gradient(180deg,rgb(158,158,158),rgb(190,190,190));border:1px solid #3c3c3c;"></div>
<div class="a" style="left:1321px;top:553px;width:13.5px;height:18px;background:#717171;border:1px solid #5c5c5c;border-radius:2.5px;"></div>
<div class="a" style="left:1173px;top:571.5px;width:178px;height:1px;background:#4a4a4a;"></div>
<div class="a" style="left:1172.5px;top:591.5px;width:179px;height:1px;background:#4c4c4c;"></div>
<div class="a" style="left:1172.5px;top:592.5px;width:179px;height:1px;background:#808080;"></div>
<div class="a" style="left:1172.5px;top:594.7px;width:178.5px;height:16px;background:#727272;border:1px solid #5a5a5a;border-top-color:#858585;"></div>
<div class="a" style="left:1173px;top:595.7px;width:17px;height:15px;background:#757575;border:1px solid #5a5a5a;border-top-color:#888;border-left-color:#888;"></div>
<div class="a" style="left:1190.5px;top:595.8px;width:48.5px;height:15.5px;background:#6e6e6e;border:1px solid #3c3c3c;border-bottom:none;"></div>
<div class="a" style="left:1238.5px;top:596.2px;width:29px;height:13.599999999999909px;background:#5f5f5f;border:1px solid #3e3e3e;border-bottom:none;"></div>
<div class="a" style="left:1266.5px;top:596.2px;width:29px;height:13.599999999999909px;background:#5f5f5f;border:1px solid #3e3e3e;border-bottom:none;"></div>
<div class="a" style="left:1294.5px;top:596.2px;width:29px;height:13.599999999999909px;background:#5f5f5f;border:1px solid #3e3e3e;border-bottom:none;"></div>
<div class="a" style="left:1322.5px;top:596.2px;width:28px;height:13.599999999999909px;background:#5f5f5f;border:1px solid #3e3e3e;border-bottom:none;"></div>
<div class="a" style="left:1196.5px;top:598px;width:15.5px;height:15.5px;background:conic-gradient(#ff0,#0f0,#0ff,#00f,#f0f,#f00,#ff0);border-radius:50%;box-shadow:0 1px 0 #ddd;"></div>
<div class="a" style="left:1201.3px;top:602.8px;width:6px;height:6px;background:#8c8c8c;border-radius:50%;"></div>
<div class="a" style="left:1231px;top:600px;width:7px;height:11px;background:linear-gradient(90deg,rgba(110,110,110,0),rgba(110,110,110,.75));z-index:3;"></div>
<div class="a" style="left:1344.3px;top:616px;width:1.3px;height:150px;background:#333;"></div>
<div class="a" style="left:1346.8px;top:616px;width:1.3px;height:150px;background:#333;"></div>
<div class="a" style="left:1349.3px;top:616px;width:1.3px;height:150px;background:#333;"></div>
<div class="a" style="left:1191.3px;top:618.1px;width:132px;height:132px;background:conic-gradient(#ffff00,#00ff00 16.67%,#00ffff 33.33%,#0000ff 50%,#ff00ff 66.67%,#ff0000 83.33%,#ffff00);border-radius:50%;-webkit-mask:radial-gradient(circle closest-side,transparent 55.5px,#000 56.5px,#000 65.2px,transparent 66px);mask:radial-gradient(circle closest-side,transparent 55.5px,#000 56.5px,#000 65.2px,transparent 66px);"></div>
<div class="a" style="left:1223px;top:649px;width:69px;height:68.5px;background:linear-gradient(180deg,rgba(0,0,0,0),#000),linear-gradient(90deg,#fff,#ff10ff);box-shadow:0 0 0 1px #5a5a5a;"></div>
<div class="a" style="left:1182.5px;top:732px;width:19.5px;height:19.5px;background:#4a2632;border:1px solid #2e1a20;"></div>
<div class="a" style="left:1172.5px;top:722.5px;width:19.5px;height:19.5px;background:#000;border:2px solid #84c8ea;box-shadow:inset 0 0 0 .7px #222,inset 0 0 0 1.8px #fff;"></div>
<div class="a" style="left:1172.5px;top:753px;width:29.5px;height:10px;background:#fff;border:1px solid #2a2a2a;background:repeating-conic-gradient(#8a8a8a 0 25%,#fff 0 50%) 0 0/9px 9px;"></div>
<div class="a" style="left:1220.5px;top:753.5px;width:7.5px;height:7.5px;background:#a00000;border:1px solid #333;"></div>
<div class="a" style="left:1252.5px;top:753.5px;width:7.5px;height:7.5px;background:#00a000;border:1px solid #333;"></div>
<div class="a" style="left:1284.5px;top:753.5px;width:7.5px;height:7.5px;background:#0000c0;border:1px solid #333;"></div>
<div class="a" style="left:1322px;top:744px;width:16.5px;height:16.5px;background:conic-gradient(#ff0,#0f0,#0ff,#00f,#f0f,#f00,#ff0);border-radius:50%;"></div>
<div class="a" style="left:1325px;top:747px;width:10.5px;height:10.5px;background:#6e6e6e;border-radius:50%;"></div>
<svg class="a" style="left:1166px;top:0px;" width="200" height="768" viewBox="1166 0 200 768"><path d="M1177.6 51.5 1182.8 58 1177.6 64.5 1177.6 60.6 1179.7 58 1177.6 55.4Z" fill="#959595"/><path d="M1173.6 51.5 1178.8 58 1173.6 64.5 1173.6 60.6 1175.7 58 1173.6 55.4Z" fill="#959595"/><path d="M1359.6 51.5 1354.4 58 1359.6 64.5 1359.6 60.6 1357.5 58 1359.6 55.4Z" fill="#8a8a8a"/><path d="M1363.6 51.5 1358.4 58 1363.6 64.5 1363.6 60.6 1361.5 58 1363.6 55.4Z" fill="#8a8a8a"/><path d="M1177.5 74.5 1181.5 78 1177.5 81.5Z" fill="#999"/><path d="M1182 75h5M1182 78h5M1182 81h5" stroke="#999" stroke-width="1.2"/><path d="M1197 84.5c-1-3 0-7 1.5-10.5 1.5 3.5 2.5 7.5 1.5 10.5Z" fill="#8c8c8c" stroke="#444" stroke-width=".6"/><path d="M1204 76v9M1204 78h3M1204 83.5h3" stroke="#444" stroke-width="1"/><circle cx="1211" cy="77" r="1.6" fill="#444"/><circle cx="1211" cy="82.5" r="1.6" fill="#444"/><path d="M1227.2 72.5c-1.3 3-2.2 6.5-2.2 9.5 0 2 .9 4 1.6 5.5h1.2c.7-1.5 1.6-3.5 1.6-5.5 0-3-.9-6.5-2.2-9.5Z" fill="#ddd" stroke="#1c1c1c" stroke-width=".9"/><path d="M1227.2 76v8" stroke="#444" stroke-width="1"/><path d="M1226.2 87.2h2v1.8h-2Z" fill="#1a1a1a"/><path d="M1223.7 90.2h7l-1.2-1.4h-4.6Z" fill="#111"/><path d="M1233 74.5v13M1233 75h3M1233 81h3M1233 87h3" stroke="#1a1a1a" stroke-width="1.1" fill="none"/><rect x="1237.2" y="73.5" width="3" height="3" fill="#e8e8e8" stroke="#1a1a1a" stroke-width=".8"/><rect x="1237.2" y="79.5" width="3" height="3" fill="#e8e8e8" stroke="#1a1a1a" stroke-width=".8"/><rect x="1237.2" y="85.5" width="3" height="3" fill="#e8e8e8" stroke="#1a1a1a" stroke-width=".8"/><path d="M1181.9 113.5c5 1 11 1 16 .5-3-2.5-7-4-11-4Z" fill="#b9d6e8" opacity=".55"/><path d="M1186.2 106.3 1194.7 98" stroke="#333" stroke-width="4" stroke-linecap="round"/><path d="M1186.2 106.3 1194.7 98" stroke="#8a8a8a" stroke-width="2.6" stroke-linecap="round"/><path d="M1185.9 105.5 1194.1000000000001 97.6" stroke="#c8c8c8" stroke-width="1" stroke-linecap="round"/><path d="M1184.2 105.8c-3.5.200-5.3 3.7-3.3 6.9 2.3 1.6 5.6 1.2 7.6-.900l-1.3-3.3Z" fill="#fff" stroke="#444" stroke-width=".5"/><path d="M1181.2 110.5c.500 2.8 4.5 3.3 7.3 1.3l-.700-1.8c-2 1.5-4.5 1.8-6.6.5Z" fill="#cfe8f8"/><circle cx="1185.4" cy="107.2" r="1.7" fill="#fff" stroke="#555" stroke-width=".5"/><path d="M1243.1000000000001 108h10.5l5 5h-14Z" fill="#f8c090"/><path d="M1244.4 106.3 1252.9 98" stroke="#333" stroke-width="4" stroke-linecap="round"/><path d="M1244.4 106.3 1252.9 98" stroke="#8a8a8a" stroke-width="2.6" stroke-linecap="round"/><path d="M1244.1000000000001 105.5 1252.3000000000002 97.6" stroke="#c8c8c8" stroke-width="1" stroke-linecap="round"/><path d="M1242.4 105.8c-3.5.200-5.3 3.7-3.3 6.9 2.3 1.6 5.6 1.2 7.6-.900l-1.3-3.3Z" fill="#fff" stroke="#444" stroke-width=".5"/><path d="M1239.4 110.5c.500 2.8 4.5 3.3 7.3 1.3l-.700-1.8c-2 1.5-4.5 1.8-6.6.5Z" fill="#f8d0b0"/><circle cx="1243.6000000000001" cy="107.2" r="1.7" fill="#fff" stroke="#555" stroke-width=".5"/><path d="M1300.7 113c5 1 10 1 15 .5l-9-3.5Z" fill="#8c8c8c" opacity=".7"/><path d="M1303 106.3 1311.5 98" stroke="#333" stroke-width="4" stroke-linecap="round"/><path d="M1303 106.3 1311.5 98" stroke="#8a8a8a" stroke-width="2.6" stroke-linecap="round"/><path d="M1302.7 105.5 1310.9 97.6" stroke="#c8c8c8" stroke-width="1" stroke-linecap="round"/><path d="M1301 105.8c-3.5.200-5.3 3.7-3.3 6.9 2.3 1.6 5.6 1.2 7.6-.900l-1.3-3.3Z" fill="#fff" stroke="#444" stroke-width=".5"/><path d="M1298 110.5c.500 2.8 4.5 3.3 7.3 1.3l-.700-1.8c-2 1.5-4.5 1.8-6.6.5Z" fill="#222"/><circle cx="1302.2" cy="107.2" r="1.7" fill="#fff" stroke="#555" stroke-width=".5"/><defs><filter id="b1"><feGaussianBlur stdDeviation=".9"/></filter><filter id="b2"><feGaussianBlur stdDeviation="1.5"/></filter><filter id="b0"><feGaussianBlur stdDeviation=".45"/></filter><filter id="gr1" x="-5%" y="-30%" width="110%" height="160%"><feTurbulence type="fractalNoise" baseFrequency=".55" numOctaves="2" seed="3" result="n"/><feDisplacementMap in="SourceGraphic" in2="n" scale="4.5" xChannelSelector="R" yChannelSelector="G"/><feGaussianBlur stdDeviation=".55"/></filter></defs><path d="M1192 132.3L1195.6 130.5L1199.1 128.9L1202.7 127.4L1206.3 126.1L1209.9 125L1213.4 124.3L1217 123.8L1220.6 123.7L1224.1 124L1227.7 124.5L1231.3 125.4L1234.9 126.4L1238.4 127.6L1242 128.9L1245.6 130.1L1249.1 131.3L1252.7 132.3L1256.3 133L1259.9 133.6L1263.4 133.8L1267 133.7L1270.6 133.4L1274.1 133L1277.7 132.4L1281.3 131.9L1284.9 132L1288.4 130.8L1292 129.7L1292 130L1288.4 131.1L1284.9 132.3L1281.3 134.8L1277.7 136.7L1274.1 138.2L1270.6 139.4L1267 140.3L1263.4 140.8L1259.9 140.9L1256.3 140.7L1252.7 140.2L1249.1 139.4L1245.6 138.4L1242 137.3L1238.4 136.1L1234.9 134.9L1231.3 133.8L1227.7 132.9L1224.1 132.2L1220.6 131.8L1217 131.6L1213.4 131.8L1209.9 132.2L1206.3 132.8L1202.7 133.6L1199.1 134.5L1195.6 135.3L1192 136Z" fill="#050505" filter="url(#b1)"/><path d="M1192 158.3L1195.6 156.7L1199.1 155.2L1202.7 153.8L1206.3 152.5L1209.9 151.4L1213.4 150.7L1217 150.2L1220.6 150.1L1224.1 150.3L1227.7 150.8L1231.3 151.5L1234.9 152.5L1238.4 153.6L1242 154.8L1245.6 156L1249.1 157.1L1252.7 158.1L1256.3 158.9L1259.9 159.4L1263.4 159.7L1267 159.7L1270.6 159.4L1274.1 159L1277.7 158.4L1281.3 157.8L1284.9 157L1288.4 155.9L1292 154.8L1292 155.1L1288.4 156.2L1284.9 157.3L1281.3 158.8L1277.7 160.4L1274.1 161.8L1270.6 162.9L1267 163.8L1263.4 164.3L1259.9 164.5L1256.3 164.3L1252.7 163.9L1249.1 163.2L1245.6 162.3L1242 161.2L1238.4 160.1L1234.9 159L1231.3 158L1227.7 157.1L1224.1 156.4L1220.6 156L1217 155.8L1213.4 155.9L1209.9 156.3L1206.3 156.8L1202.7 157.5L1199.1 158.3L1195.6 159.1L1192 159.8Z" fill="#0a0a0a" filter="url(#b1)"/><path d="M1186 181.5L1189.4 179.8L1192.9 178.2L1196.3 176.8L1199.7 175.5L1203.1 174.4L1206.6 173.7L1210 173.2L1213.4 173.1L1216.9 173.3L1220.3 173.8L1223.7 174.5L1227.1 175.5L1230.6 176.6L1234 177.8L1237.4 179L1240.9 180.1L1244.3 181.1L1247.7 181.9L1251.1 182.4L1254.6 182.7L1258 182.7L1261.4 182.4L1264.9 182.1L1268.3 181.6L1271.7 181.2L1275.1 181L1278.6 179.9L1282 178.8L1282 179.1L1278.6 180.2L1275.1 181.3L1271.7 183.4L1268.3 185.3L1264.9 186.7L1261.4 187.9L1258 188.8L1254.6 189.3L1251.1 189.5L1247.7 189.4L1244.3 188.9L1240.9 188.2L1237.4 187.3L1234 186.2L1230.6 185.1L1227.1 184L1223.7 183L1220.3 182.1L1216.9 181.4L1213.4 181L1210 180.9L1206.6 181L1203.1 181.3L1199.7 181.8L1196.3 182.5L1192.9 183.3L1189.4 184L1186 184.5Z" fill="#161616" filter="url(#b0)"/><path d="M1188 180.1L1191.3 179L1194.6 177.8L1197.9 176.7L1201.1 175.7L1204.4 174.9L1207.7 174.3L1211 174L1214.3 174L1217.6 174.3L1220.9 174.9L1224.1 175.7L1227.4 176.7L1230.7 177.8L1234 179L1237.3 180.1L1240.6 181.1L1243.9 182L1247.1 182.6L1250.4 182.9L1253.7 183L1257 182.8L1260.3 182.2L1263.6 181.4L1266.9 180.5L1270.1 179.4L1273.4 178.2L1276.7 177.1L1280 176L1280 176.3L1276.7 177.4L1273.4 178.5L1270.1 179.7L1266.9 180.8L1263.6 181.7L1260.3 182.5L1257 183.1L1253.7 183.4L1250.4 183.3L1247.1 183L1243.9 182.4L1240.6 181.6L1237.3 180.6L1234 179.5L1230.7 178.3L1227.4 177.2L1224.1 176.2L1220.9 175.4L1217.6 174.8L1214.3 174.5L1211 174.4L1207.7 174.7L1204.4 175.3L1201.1 176L1197.9 177L1194.6 178.1L1191.3 179.3L1188 180.4Z" fill="#555" opacity=".7"/><path d="M1188 181.9L1191.3 180.8L1194.6 179.6L1197.9 178.5L1201.1 177.5L1204.4 176.7L1207.7 176.1L1211 175.8L1214.3 175.8L1217.6 176.1L1220.9 176.7L1224.1 177.5L1227.4 178.5L1230.7 179.6L1234 180.8L1237.3 181.9L1240.6 182.9L1243.9 183.8L1247.1 184.4L1250.4 184.7L1253.7 184.8L1257 184.6L1260.3 184L1263.6 183.2L1266.9 182.3L1270.1 181.2L1273.4 180L1276.7 178.9L1280 177.8L1280 178.1L1276.7 179.2L1273.4 180.3L1270.1 181.5L1266.9 182.6L1263.6 183.5L1260.3 184.3L1257 184.9L1253.7 185.2L1250.4 185.1L1247.1 184.8L1243.9 184.2L1240.6 183.4L1237.3 182.4L1234 181.3L1230.7 180.1L1227.4 179L1224.1 178L1220.9 177.2L1217.6 176.6L1214.3 176.3L1211 176.2L1207.7 176.5L1204.4 177.1L1201.1 177.8L1197.9 178.8L1194.6 179.9L1191.3 181.1L1188 182.2Z" fill="#555" opacity=".7"/><path d="M1188 183.7L1191.3 182.6L1194.6 181.4L1197.9 180.3L1201.1 179.3L1204.4 178.5L1207.7 177.9L1211 177.6L1214.3 177.6L1217.6 177.9L1220.9 178.5L1224.1 179.3L1227.4 180.3L1230.7 181.4L1234 182.6L1237.3 183.7L1240.6 184.7L1243.9 185.6L1247.1 186.2L1250.4 186.5L1253.7 186.6L1257 186.4L1260.3 185.8L1263.6 185L1266.9 184.1L1270.1 183L1273.4 181.8L1276.7 180.7L1280 179.6L1280 179.9L1276.7 181L1273.4 182.1L1270.1 183.3L1266.9 184.4L1263.6 185.3L1260.3 186.1L1257 186.7L1253.7 187L1250.4 186.9L1247.1 186.6L1243.9 186L1240.6 185.2L1237.3 184.2L1234 183.1L1230.7 181.9L1227.4 180.8L1224.1 179.8L1220.9 179L1217.6 178.4L1214.3 178.1L1211 178L1207.7 178.3L1204.4 178.9L1201.1 179.6L1197.9 180.6L1194.6 181.7L1191.3 182.9L1188 184Z" fill="#555" opacity=".7"/><path d="M1188 185.5L1191.3 184.4L1194.6 183.2L1197.9 182.1L1201.1 181.1L1204.4 180.3L1207.7 179.7L1211 179.4L1214.3 179.4L1217.6 179.7L1220.9 180.3L1224.1 181.1L1227.4 182.1L1230.7 183.2L1234 184.4L1237.3 185.5L1240.6 186.5L1243.9 187.4L1247.1 188L1250.4 188.3L1253.7 188.4L1257 188.2L1260.3 187.6L1263.6 186.8L1266.9 185.9L1270.1 184.8L1273.4 183.6L1276.7 182.5L1280 181.4L1280 181.7L1276.7 182.8L1273.4 183.9L1270.1 185.1L1266.9 186.2L1263.6 187.1L1260.3 187.9L1257 188.5L1253.7 188.8L1250.4 188.7L1247.1 188.4L1243.9 187.8L1240.6 187L1237.3 186L1234 184.9L1230.7 183.7L1227.4 182.6L1224.1 181.6L1220.9 180.8L1217.6 180.2L1214.3 179.9L1211 179.8L1207.7 180.1L1204.4 180.7L1201.1 181.4L1197.9 182.4L1194.6 183.5L1191.3 184.7L1188 185.8Z" fill="#555" opacity=".7"/><path d="M1186 206.7L1189.6 205.3L1193.1 203.8L1196.7 202.5L1200.3 201.3L1203.9 200.3L1207.4 199.6L1211 199.2L1214.6 199.1L1218.1 199.4L1221.7 200L1225.3 200.8L1228.9 201.9L1232.4 203.1L1236 204.3L1239.6 205.5L1243.1 206.7L1246.7 207.6L1250.3 208.4L1253.9 208.8L1257.4 209L1261 208.9L1264.6 208.5L1268.1 207.8L1271.7 207L1275.3 206.1L1278.9 205L1282.4 203.8L1286 202.7L1286 203L1282.4 204.1L1278.9 205.3L1275.3 206.6L1271.7 208.1L1268.1 209.4L1264.6 210.4L1261 211.1L1257.4 211.6L1253.9 211.6L1250.3 211.4L1246.7 210.9L1243.1 210L1239.6 209L1236 207.9L1232.4 206.6L1228.9 205.5L1225.3 204.4L1221.7 203.5L1218.1 202.8L1214.6 202.4L1211 202.3L1207.4 202.5L1203.9 203L1200.3 203.7L1196.7 204.6L1193.1 205.6L1189.6 206.6L1186 207.6Z" fill="#1a1a1a" filter="url(#b0)"/><path d="M1190 229.7L1193.6 228.3L1197.1 227L1200.7 225.7L1204.3 224.6L1207.9 223.6L1211.4 223L1215 222.6L1218.6 222.5L1222.1 222.8L1225.7 223.3L1229.3 224.1L1232.9 225.1L1236.4 226.2L1240 227.4L1243.6 228.6L1247.1 229.6L1250.7 230.5L1254.3 231.2L1257.9 231.7L1261.4 231.8L1265 231.7L1268.6 231.3L1272.1 230.7L1275.7 229.9L1279.3 229.1L1282.9 228L1286.4 226.9L1290 225.8L1290 226.1L1286.4 227.2L1282.9 228.3L1279.3 229.6L1275.7 230.9L1272.1 232.1L1268.6 233.1L1265 233.8L1261.4 234.1L1257.9 234.2L1254.3 234L1250.7 233.5L1247.1 232.7L1243.6 231.8L1240 230.7L1236.4 229.5L1232.9 228.4L1229.3 227.4L1225.7 226.6L1222.1 225.9L1218.6 225.6L1215 225.5L1211.4 225.6L1207.9 226.1L1204.3 226.8L1200.7 227.6L1197.1 228.6L1193.6 229.5L1190 230.4Z" fill="#10161a" opacity=".88" filter="url(#b1)"/><path d="M1200 252L1203.3 250.2L1206.6 248.6L1209.9 247.1L1213.1 245.8L1216.4 244.7L1219.7 244L1223 243.5L1226.3 243.5L1229.6 243.7L1232.9 244.3L1236.1 245.1L1239.4 246.2L1242.7 247.4L1246 248.6L1249.3 249.9L1252.6 251L1255.9 252L1259.1 252.8L1262.4 253.3L1265.7 253.5L1269 253.4L1272.3 253.1L1275.6 252.6L1278.9 252L1282.1 251.6L1285.4 252L1288.7 250.8L1292 249.7L1292 250L1288.7 251.1L1285.4 252.3L1282.1 255.1L1278.9 257L1275.6 258.5L1272.3 259.7L1269 260.6L1265.7 261.1L1262.4 261.2L1259.1 261L1255.9 260.5L1252.6 259.7L1249.3 258.7L1246 257.5L1242.7 256.3L1239.4 255.2L1236.1 254.1L1232.9 253.2L1229.6 252.5L1226.3 252L1223 251.9L1219.7 252.1L1216.4 252.5L1213.1 253.2L1209.9 254L1206.6 254.8L1203.3 255.7L1200 256.3Z" fill="#060606" filter="url(#b1)"/><path d="M1184 274.8L1187.4 272.9L1190.9 271.1L1194.3 269.6L1197.7 268.2L1201.1 267.1L1204.6 266.3L1208 265.9L1211.4 265.7L1214.9 266L1218.3 266.5L1221.7 267.4L1225.1 268.4L1228.6 269.6L1232 270.9L1235.4 272.1L1238.9 273.3L1242.3 274.3L1245.7 275.1L1249.1 275.6L1252.6 275.9L1256 275.9L1259.4 275.6L1262.9 275.2L1266.3 274.8L1269.7 274.5L1273.1 276L1276.6 274.8L1280 273.7L1280 274L1276.6 275.1L1273.1 276.3L1269.7 280.2L1266.3 282.3L1262.9 283.9L1259.4 285.2L1256 286.1L1252.6 286.7L1249.1 286.9L1245.7 286.7L1242.3 286.2L1238.9 285.4L1235.4 284.4L1232 283.3L1228.6 282.1L1225.1 280.9L1221.7 279.8L1218.3 278.9L1214.9 278.2L1211.4 277.8L1208 277.6L1204.6 277.7L1201.1 278.1L1197.7 278.7L1194.3 279.5L1190.9 280.3L1187.4 281L1184 281.5Z" fill="#050505" filter="url(#b1)"/><path d="M1274 271c6-2.5 12-4 18-3.5" stroke="#1a1a1a" stroke-width="3.5" fill="none" filter="url(#b1)"/><path d="M1186 298.4L1189.7 297.1L1193.4 295.8L1197.1 294.5L1200.9 293.4L1204.6 292.5L1208.3 291.8L1212 291.5L1215.7 291.4L1219.4 291.7L1223.1 292.2L1226.9 293L1230.6 294L1234.3 295.1L1238 296.3L1241.7 297.5L1245.4 298.5L1249.1 299.4L1252.9 300.1L1256.6 300.5L1260.3 300.6L1264 300.5L1267.7 300.1L1271.4 299.5L1275.1 298.7L1278.9 297.8L1282.6 296.7L1286.3 295.6L1290 294.5L1290 294.8L1286.3 295.9L1282.6 297L1278.9 298.2L1275.1 299.6L1271.4 300.7L1267.7 301.7L1264 302.3L1260.3 302.7L1256.6 302.8L1252.9 302.5L1249.1 302L1245.4 301.2L1241.7 300.3L1238 299.2L1234.3 298L1230.6 296.9L1226.9 295.9L1223.1 295.1L1219.4 294.4L1215.7 294.1L1212 294L1208.3 294.2L1204.6 294.6L1200.9 295.3L1197.1 296.2L1193.4 297.2L1189.7 298.1L1186 299.1Z" fill="#1c1c1c" opacity=".8" filter="url(#b0)"/><path d="M1187 300.5L1190.7 299.2L1194.4 297.9L1198.1 296.6L1201.9 295.5L1205.6 294.6L1209.3 293.9L1213 293.6L1216.7 293.5L1220.4 293.8L1224.1 294.3L1227.9 295.1L1231.6 296.1L1235.3 297.2L1239 298.4L1242.7 299.6L1246.4 300.6L1250.1 301.5L1253.9 302.2L1257.6 302.6L1261.3 302.7L1265 302.6L1268.7 302.2L1272.4 301.6L1276.1 300.8L1279.9 299.9L1283.6 298.8L1287.3 297.7L1291 296.6L1291 296.9L1287.3 298L1283.6 299.1L1279.9 300.3L1276.1 301.7L1272.4 302.8L1268.7 303.8L1265 304.4L1261.3 304.8L1257.6 304.9L1253.9 304.6L1250.1 304.1L1246.4 303.3L1242.7 302.4L1239 301.3L1235.3 300.1L1231.6 299L1227.9 298L1224.1 297.2L1220.4 296.5L1216.7 296.2L1213 296.1L1209.3 296.3L1205.6 296.7L1201.9 297.4L1198.1 298.3L1194.4 299.3L1190.7 300.2L1187 301.2Z" fill="#1c1c1c" opacity=".8" filter="url(#b0)"/><path d="M1188 302.6L1191.7 301.3L1195.4 300L1199.1 298.7L1202.9 297.6L1206.6 296.7L1210.3 296L1214 295.7L1217.7 295.6L1221.4 295.9L1225.1 296.4L1228.9 297.2L1232.6 298.2L1236.3 299.3L1240 300.5L1243.7 301.7L1247.4 302.7L1251.1 303.6L1254.9 304.3L1258.6 304.7L1262.3 304.8L1266 304.7L1269.7 304.3L1273.4 303.7L1277.1 302.9L1280.9 302L1284.6 300.9L1288.3 299.8L1292 298.7L1292 299L1288.3 300.1L1284.6 301.2L1280.9 302.4L1277.1 303.8L1273.4 304.9L1269.7 305.9L1266 306.5L1262.3 306.9L1258.6 307L1254.9 306.7L1251.1 306.2L1247.4 305.4L1243.7 304.5L1240 303.4L1236.3 302.2L1232.6 301.1L1228.9 300.1L1225.1 299.3L1221.4 298.6L1217.7 298.3L1214 298.2L1210.3 298.4L1206.6 298.8L1202.9 299.5L1199.1 300.4L1195.4 301.4L1191.7 302.3L1188 303.3Z" fill="#1c1c1c" opacity=".8" filter="url(#b0)"/><path d="M1189 304.7L1192.7 303.4L1196.4 302.1L1200.1 300.8L1203.9 299.7L1207.6 298.8L1211.3 298.1L1215 297.8L1218.7 297.7L1222.4 298L1226.1 298.5L1229.9 299.3L1233.6 300.3L1237.3 301.4L1241 302.6L1244.7 303.8L1248.4 304.8L1252.1 305.7L1255.9 306.4L1259.6 306.8L1263.3 306.9L1267 306.8L1270.7 306.4L1274.4 305.8L1278.1 305L1281.9 304.1L1285.6 303L1289.3 301.9L1293 300.8L1293 301.1L1289.3 302.2L1285.6 303.3L1281.9 304.5L1278.1 305.9L1274.4 307L1270.7 308L1267 308.6L1263.3 309L1259.6 309.1L1255.9 308.8L1252.1 308.3L1248.4 307.5L1244.7 306.6L1241 305.5L1237.3 304.3L1233.6 303.2L1229.9 302.2L1226.1 301.4L1222.4 300.7L1218.7 300.4L1215 300.3L1211.3 300.5L1207.6 300.9L1203.9 301.6L1200.1 302.5L1196.4 303.5L1192.7 304.4L1189 305.4Z" fill="#1c1c1c" opacity=".8" filter="url(#b0)"/><path d="M1190 325.5L1193.6 324.1L1197.1 322.7L1200.7 321.3L1204.3 320.2L1207.9 319.2L1211.4 318.5L1215 318.1L1218.6 318L1222.1 318.2L1225.7 318.8L1229.3 319.5L1232.9 320.5L1236.4 321.6L1240 322.8L1243.6 324L1247.1 325.1L1250.7 326L1254.3 326.7L1257.9 327.2L1261.4 327.4L1265 327.3L1268.6 327L1272.1 326.4L1275.7 325.7L1279.3 325L1282.9 324L1286.4 322.9L1290 321.8L1290 322.1L1286.4 323.2L1282.9 324.3L1279.3 325.7L1275.7 327.1L1272.1 328.4L1268.6 329.4L1265 330.1L1261.4 330.6L1257.9 330.7L1254.3 330.5L1250.7 330L1247.1 329.3L1243.6 328.3L1240 327.3L1236.4 326.1L1232.9 325L1229.3 324L1225.7 323.1L1222.1 322.5L1218.6 322.1L1215 322L1211.4 322.1L1207.9 322.5L1204.3 323.2L1200.7 324L1197.1 324.8L1193.6 325.7L1190 326.6Z" fill="#0c0c0c" filter="url(#b1)"/><path d="M1188 348.9L1191.1 347.4L1194.3 345.9L1197.4 344.5L1200.6 343.3L1203.7 342.3L1206.9 341.5L1210 341.1L1213.1 340.9L1216.3 341L1219.4 341.4L1222.6 342.1L1225.7 343L1228.9 344L1232 345L1235.1 346.1L1238.3 347.2L1241.4 348.1L1244.6 348.8L1247.7 349.3L1250.9 349.6L1254 349.7L1257.1 349.6L1260.3 349.3L1263.4 349L1266.6 348.6L1269.7 348L1272.9 347L1276 346.1L1276 346.4L1272.9 347.3L1269.7 348.3L1266.6 349.8L1263.4 351.4L1260.3 352.8L1257.1 353.9L1254 354.8L1250.9 355.3L1247.7 355.6L1244.6 355.5L1241.4 355.2L1238.3 354.6L1235.1 353.8L1232 352.9L1228.9 351.9L1225.7 351L1222.6 350L1219.4 349.2L1216.3 348.6L1213.1 348.2L1210 348L1206.9 348L1203.7 348.2L1200.6 348.7L1197.4 349.2L1194.3 349.8L1191.1 350.3L1188 350.8Z" fill="#262626" opacity=".92" filter="url(#gr1)"/><path d="M1188 373.2L1191.6 371.6L1195.1 370.1L1198.7 368.6L1202.3 367.3L1205.9 366.3L1209.4 365.5L1213 365L1216.6 364.9L1220.1 365L1223.7 365.5L1227.3 366.3L1230.9 367.3L1234.4 368.4L1238 369.6L1241.6 370.8L1245.1 371.9L1248.7 372.9L1252.3 373.7L1255.9 374.2L1259.4 374.5L1263 374.5L1266.6 374.3L1270.1 373.9L1273.7 373.3L1277.3 372.8L1280.9 372L1284.4 370.9L1288 369.8L1288 370.1L1284.4 371.2L1280.9 372.3L1277.3 373.9L1273.7 375.5L1270.1 376.9L1266.6 378.1L1263 378.9L1259.4 379.5L1255.9 379.7L1252.3 379.6L1248.7 379.1L1245.1 378.4L1241.6 377.5L1238 376.5L1234.4 375.4L1230.9 374.3L1227.3 373.2L1223.7 372.4L1220.1 371.7L1216.6 371.2L1213 371.1L1209.4 371.1L1205.9 371.5L1202.3 372L1198.7 372.7L1195.1 373.4L1191.6 374.2L1188 374.9Z" fill="#141414" opacity=".92" filter="url(#b1)"/><path d="M1196 397.2L1198.9 395.6L1201.7 394.1L1204.6 392.6L1207.4 391.3L1210.3 390.3L1213.1 389.5L1216 389L1218.9 388.9L1221.7 389L1224.6 389.5L1227.4 390.3L1230.3 391.3L1233.1 392.4L1236 393.6L1238.9 394.8L1241.7 395.9L1244.6 396.9L1247.4 397.7L1250.3 398.2L1253.1 398.5L1256 398.5L1258.9 398.3L1261.7 397.9L1264.6 397.3L1267.4 396.8L1270.3 396L1273.1 394.9L1276 393.8L1276 394.1L1273.1 395.2L1270.3 396.3L1267.4 397.9L1264.6 399.5L1261.7 400.9L1258.9 402.1L1256 402.9L1253.1 403.5L1250.3 403.7L1247.4 403.6L1244.6 403.1L1241.7 402.4L1238.9 401.5L1236 400.5L1233.1 399.4L1230.3 398.3L1227.4 397.2L1224.6 396.4L1221.7 395.7L1218.9 395.2L1216 395.1L1213.1 395.1L1210.3 395.5L1207.4 396L1204.6 396.7L1201.7 397.4L1198.9 398.2L1196 398.9Z" fill="#151515" opacity=".85" filter="url(#b2)"/><path d="M1190 421.2L1193.4 419.5L1196.9 417.9L1200.3 416.5L1203.7 415.2L1207.1 414.1L1210.6 413.3L1214 412.8L1217.4 412.6L1220.9 412.8L1224.3 413.3L1227.7 414L1231.1 415L1234.6 416.1L1238 417.3L1241.4 418.6L1244.9 419.7L1248.3 420.7L1251.7 421.5L1255.1 422L1258.6 422.3L1262 422.4L1265.4 422.2L1268.9 421.8L1272.3 421.3L1275.7 420.7L1279.1 420L1282.6 418.9L1286 417.8L1286 418.1L1282.6 419.2L1279.1 420.3L1275.7 421.9L1272.3 423.6L1268.9 425L1265.4 426.2L1262 427.1L1258.6 427.6L1255.1 427.9L1251.7 427.8L1248.3 427.4L1244.9 426.7L1241.4 425.8L1238 424.7L1234.6 423.6L1231.1 422.5L1227.7 421.5L1224.3 420.6L1220.9 419.9L1217.4 419.5L1214 419.3L1210.6 419.3L1207.1 419.7L1203.7 420.2L1200.3 420.8L1196.9 421.6L1193.4 422.3L1190 422.9Z" fill="#121212" opacity=".92" filter="url(#b1)"/><path d="M1215 436.5c6-2 14-2 20 0Z" fill="#111" filter="url(#b0)"/><rect x="1338" y="120" width="12.5" height="316" fill="#666"/><rect x="1338.5" y="120.5" width="11.5" height="11" rx="2" fill="#6e6e6e" stroke="#7c7c7c" stroke-width=".8"/><path d="M1341.3 128h6l-3-3.4Z" fill="#2a2a2a"/><rect x="1338.5" y="132.5" width="11.5" height="257" rx="2" fill="#6e6e6e" stroke="#7c7c7c" stroke-width="1"/><path d="M1341 258h6.5M1341 260.5h6.5M1341 263h6.5" stroke="#444" stroke-width="1.1"/><rect x="1338.5" y="424.5" width="11.5" height="11.5" rx="2" fill="#6e6e6e" stroke="#7c7c7c" stroke-width=".8"/><path d="M1341.3 428.5h6l-3 3.4Z" fill="#2a2a2a"/><defs><linearGradient id="wg2" x1="0" y1="0" x2="0" y2="1"><stop offset="0" stop-color="#fff"/><stop offset="1" stop-color="#d4e8f4"/></linearGradient></defs><path d="M1314.5 440.5h13.5v10.5l-4 4h-9.5Z" fill="url(#wg2)" stroke="#2a2a2a" stroke-width=".8"/><path d="M1328 451h-4v4" fill="#bbb" stroke="#2a2a2a" stroke-width=".7"/><path d="M1334.5 445h11.5l-1 9c-.2 1-1 1.5-2 1.5h-5.5c-1 0-1.8-.5-2-1.5Z" fill="#fff" stroke="#222" stroke-width=".8"/><ellipse cx="1340.3" cy="444.5" rx="6" ry="1.9" fill="#ddd" stroke="#222" stroke-width=".8"/><path d="M1336.5 443.5c.5-4.5 7-4.5 7.5 0" fill="none" stroke="#222" stroke-width=".9"/><path d="M1338 447.5v7M1340.3 447.5v7.5M1342.6 447.5v7" stroke="#aaa" stroke-width=".7"/><path d="M1177.5 466 1181.5 469.5 1177.5 473Z" fill="#999"/><path d="M1182 466.5h5M1182 469.5h5M1182 472.5h5" stroke="#999" stroke-width="1.2"/><path d="M1198.7 463.5c-1.3 3-2.2 6.5-2.2 9.5 0 2 .9 4 1.6 5.5h1.2c.7-1.5 1.6-3.5 1.6-5.5 0-3-.9-6.5-2.2-9.5Z" fill="#ddd" stroke="#1c1c1c" stroke-width=".9"/><path d="M1198.7 467v8" stroke="#444" stroke-width="1"/><path d="M1197.7 478.2h2v1.8h-2Z" fill="#1a1a1a"/><path d="M1195.2 481.2h7l-1.2-1.4h-4.6Z" fill="#111"/><circle cx="1208.5" cy="473" r="2.6" fill="#1a1a1a"/><circle cx="1208.5" cy="473" r="3.6" fill="none" stroke="#1a1a1a" stroke-width="1.6" stroke-dasharray="1.4 1.4"/><defs><linearGradient id="pv" gradientUnits="userSpaceOnUse" x1="1188" y1="0" x2="1335" y2="0"><stop offset="0" stop-color="#555" stop-opacity="0"/><stop offset=".1" stop-color="#555" stop-opacity=".35"/><stop offset=".3" stop-color="#333" stop-opacity=".8"/><stop offset=".42" stop-color="#0c0c0c"/><stop offset=".75" stop-color="#111"/><stop offset=".9" stop-color="#333" stop-opacity=".55"/><stop offset="1" stop-color="#444" stop-opacity="0"/></linearGradient></defs><path d="M1190.2 511.4L1192.4 510.2L1195.4 508.6L1198.9 506.7L1202.8 504.8L1206.7 503L1210.4 501.4L1214 500.1L1217.7 498.8L1221.5 497.7L1225.2 496.7L1228.8 495.9L1232.2 495.5L1235.3 495.4L1238.2 495.5L1241 495.9L1243.8 496.5L1246.6 497.2L1249.4 498L1252.3 499L1255 500.1L1257.9 501.4L1260.8 502.8L1263.9 504.1L1267.2 505.4L1270.5 506.6L1273.9 507.9L1277.5 509.1L1281.2 510.3L1285 511.1L1288.8 511.5L1292.6 511.4L1296.2 511.1L1299.8 510.4L1303.4 509.4L1307 508.1L1310.7 506.6L1314.7 504.6L1319 502L1323.3 499.1L1327.4 496.4L1330.8 494L1333.2 492.3L1332.8 491.7L1330.2 493L1326.6 495L1322.3 497.4L1317.7 499.7L1313.3 501.8L1309.3 503.4L1305.8 504.5L1302.3 505.4L1298.9 506L1295.6 506.4L1292.4 506.6L1289.2 506.5L1285.9 506.1L1282.5 505.3L1279.1 504.2L1275.6 503L1272.2 501.8L1268.8 500.6L1265.7 499.5L1262.7 498.3L1259.7 497.1L1256.7 495.9L1253.7 494.8L1250.6 494L1247.5 493.3L1244.5 492.8L1241.5 492.4L1238.4 492.2L1235.2 492.2L1231.8 492.5L1228.3 493.2L1224.6 494.1L1220.8 495.3L1216.9 496.6L1213.2 498.1L1209.6 499.6L1205.9 501.3L1202.1 503.4L1198.3 505.6L1194.8 507.6L1191.9 509.4L1189.8 510.6Z" fill="url(#pv)" filter="url(#b0)"/><circle cx="1338.5" cy="508" r="5.3" fill="#888" stroke="#222" stroke-width="1"/><circle cx="1338.5" cy="508" r="3.6" fill="#ddd"/><path d="M1336.5 506.5l4 3.5" stroke="#444" stroke-width="1.5"/><path d="M1342 512 1347 517" stroke="#f0f0f0" stroke-width="2.6"/><path d="M1342 512 1347.5 517.5" stroke="#222" stroke-width="1" transform="translate(.9 -.9)"/><defs><linearGradient id="sl" x1="0" y1="0" x2="1" y2="0"><stop offset="0" stop-color="#7c7c7c"/><stop offset="1" stop-color="#ababab"/></linearGradient></defs><rect x="1210.5" y="540" width="26" height="7" fill="url(#sl)" stroke="#4a4a4a" stroke-width=".8"/><path d="M1236.5 547H1261.5V545" fill="none" stroke="#444" stroke-width="1"/><path d="M1308 537.3 1312.5 531.5 1317 537.3ZM1308 540H1317L1312.5 545.8Z" fill="#2c2c2c"/><g fill="none" stroke="#f4f4f4" stroke-width="1"><circle cx="1327.7" cy="534" r="2.5"/><circle cx="1324.9" cy="539" r="2.5"/><circle cx="1330.5" cy="539" r="2.5"/></g><path d="M1325.3 557.5v9l5-4.5Z" fill="#2a2a2a"/><rect x="1338" y="523.5" width="12.5" height="48" fill="#666"/><rect x="1338.5" y="524" width="11.5" height="11" rx="2" fill="#6e6e6e" stroke="#7c7c7c" stroke-width=".8"/><path d="M1341.3 531.5h6l-3-3.4Z" fill="#2a2a2a"/><rect x="1338.5" y="535.8" width="11.5" height="10.5" rx="2" fill="#707070" stroke="#7c7c7c" stroke-width=".8"/><rect x="1338.5" y="559.5" width="11.5" height="11.5" rx="2" fill="#6e6e6e" stroke="#7c7c7c" stroke-width=".8"/><path d="M1341.3 563.5h6l-3 3.4Z" fill="#2a2a2a"/><path d="M1328.1 582.9 1325.5 586.4 1324.9 583.2ZM1325.2 587.8 1320.9 588.4 1322.7 585.7ZM1319.7 589.1 1316.2 586.5 1319.4 585.9ZM1314.8 586.2 1314.2 581.9 1316.9 583.7ZM1313.5 580.7 1316.1 577.2 1316.7 580.4ZM1316.4 575.8 1320.7 575.2 1318.9 577.9ZM1321.9 574.5 1325.4 577.1 1322.2 577.7ZM1326.8 577.4 1327.4 581.7 1324.7 579.9Z" fill="#3c3c3c"/><defs><linearGradient id="wr" x1="0" y1="0" x2="0" y2="1"><stop offset="0" stop-color="#fff"/><stop offset=".55" stop-color="#e4e4e4"/><stop offset="1" stop-color="#8a8a8a"/></linearGradient></defs><path d="M1336.2 574.2c-2.3 2.3-1.8 6.2 1.5 7.7v7.3h5.8v-7.3c3.3-1.5 3.8-5.4 1.5-7.7l-.700.2v4.3l-1.8 1.3h-3.8l-1.8-1.3v-4.3Z" fill="url(#wr)" stroke="#3a3a3a" stroke-width=".6"/><path d="M1177.5 599.7 1181.5 603.2 1177.5 606.7Z" fill="#999"/><path d="M1182 600.2h5M1182 603.2h5M1182 606.2h5" stroke="#999" stroke-width="1.2"/><rect x="1244" y="599" width="17" height="3" fill="#999"/><rect x="1244" y="603.5" width="17" height="3" fill="#888"/><rect x="1244" y="608" width="17" height="2.5" fill="#999"/><g fill="#8c8c8c"><rect x="1274" y="599.5" width="4" height="4"/><rect x="1279" y="599.5" width="4" height="4"/><rect x="1284" y="599.5" width="4" height="4"/><rect x="1274" y="604.5" width="4" height="4"/><rect x="1284" y="604.5" width="4" height="4"/><rect x="1279" y="609" width="4" height="1.5"/></g><rect x="1278.5" y="603.5" width="5.5" height="5.5" fill="none" stroke="#aaa" stroke-width="1"/><g fill="#909090"><rect x="1301" y="599" width="6" height="5"/><rect x="1311" y="599" width="6" height="5"/><rect x="1301" y="607.5" width="6" height="3"/><rect x="1311" y="607.5" width="6" height="3"/></g><path d="M1304 604v3.5M1314 604v3.5M1304 605.5h10" stroke="#909090" stroke-width="1"/><rect x="1329" y="600.5" width="16" height="9" fill="none" stroke="#8c8c8c" stroke-width="1.3"/><path d="M1332.5 600.5v9M1341.5 600.5v9" stroke="#8c8c8c" stroke-width="1"/><circle cx="1257.3" cy="684.1" r="65.8" fill="none" stroke="#2a2a2a" stroke-opacity=".45" stroke-width=".8"/><circle cx="1257.3" cy="684.1" r="56.2" fill="none" stroke="#2a2a2a" stroke-opacity=".4" stroke-width=".8"/><rect x="1203.4" y="714.2" width="7" height="7" fill="#e018e8" stroke="#fff" stroke-width="1.5" transform="rotate(-32 1206.9 717.7)"/><rect x="1202.3" y="713.1" width="9.2" height="9.2" fill="none" stroke="#222" stroke-width=".6" transform="rotate(-32 1206.9 717.7)"/><circle cx="1222.8" cy="717.7" r="4" fill="none" stroke="#222" stroke-width="2"/><circle cx="1222.8" cy="717.7" r="4" fill="none" stroke="#f4f4f4" stroke-width="1"/><path d="M1327 747.5v9.5l8-4.7Z" fill="#a03018"/><path d="M1327 747.5v9.5l3.5-4.7Z" fill="#5a2a18"/></svg>
<div class="a t" style="left:1245.5px;top:75.5px;font-size:11.5px;line-height:11.5px;height:11.5px;color:#d4d4d4;"><span class="j" style="width:57.5px;transform:scaleX(.6336);margin-right:-21.07px">サブツール</span></div>
<div class="a t" style="left:1282.3px;top:75.5px;font-size:11px;line-height:11px;height:11px;color:#d4d4d4;">[</div>
<div class="a t" style="left:1285px;top:75.8px;font-size:11px;line-height:11px;height:11px;color:#d4d4d4;"><span class="j" style="width:11px;transform:scaleX(.85);margin-right:-1.65px">筆</span></div>
<div class="a t" style="left:1294px;top:75.5px;font-size:11px;line-height:11px;height:11px;color:#d4d4d4;">]</div>
<div class="a t" style="left:1200.5px;top:97.6px;font-size:12px;line-height:12px;height:12px;color:#f6f6f6;"><span class="j">水彩</span></div>
<div class="a t" style="left:1259px;top:97.6px;font-size:12px;line-height:12px;height:12px;color:#f6f6f6;"><span class="j">油彩</span></div>
<div class="a t" style="left:1317.5px;top:97.6px;font-size:12px;line-height:12px;height:12px;color:#f6f6f6;"><span class="j">墨</span></div>
<div class="a t" style="right:31px;top:128.5px;font-size:12px;line-height:12px;height:12px;color:#f6f6f6;background:rgba(112,112,112,.8);padding:1px 0 1px 2px;height:14px;"><span class="j">不透明水彩</span> 2</div>
<div class="a t" style="right:31px;top:152.5px;font-size:12px;line-height:12px;height:12px;color:#f6f6f6;background:rgba(112,112,112,.8);padding:1px 0 1px 2px;height:14px;"><span class="j" style="width:48px;transform:scaleX(.95);margin-right:-2.4px">濃い水彩</span></div>
<div class="a t" style="right:31px;top:176.5px;font-size:12px;line-height:12px;height:12px;color:#f6f6f6;background:rgba(112,112,112,.8);padding:1px 0 1px 2px;height:14px;"><span class="j">油彩平筆</span> 2</div>
<div class="a t" style="right:31px;top:200.5px;font-size:12px;line-height:12px;height:12px;color:#f6f6f6;background:rgba(112,112,112,.8);padding:1px 0 1px 2px;height:14px;"><span class="j" style="width:108px;transform:scaleX(.8027);margin-right:-21.31px">イラスト線画用ペン</span> 2</div>
<div class="a t" style="right:31px;top:224.5px;font-size:12px;line-height:12px;height:12px;color:#f6f6f6;background:rgba(107,134,152,.85);padding:1px 0 1px 2px;height:14px;"><span class="j" style="width:48px;transform:scaleX(.95);margin-right:-2.4px">濃い鉛筆</span> 2</div>
<div class="a t" style="right:31px;top:248.5px;font-size:12px;line-height:12px;height:12px;color:#f6f6f6;background:rgba(112,112,112,.8);padding:1px 0 1px 2px;height:14px;"><span class="j" style="width:60px;transform:scaleX(.9057);margin-right:-5.66px">滑らか水彩</span></div>
<div class="a t" style="right:31px;top:272.5px;font-size:12px;line-height:12px;height:12px;color:#f6f6f6;background:rgba(112,112,112,.8);padding:1px 0 1px 2px;height:14px;"><span class="j" style="width:84px;transform:scaleX(.8206);margin-right:-15.07px">塗り＆なじませ</span></div>
<div class="a t" style="right:31px;top:296.5px;font-size:12px;line-height:12px;height:12px;color:#f6f6f6;background:rgba(112,112,112,.8);padding:1px 0 1px 2px;height:14px;"><span class="j">水彩毛筆</span></div>
<div class="a t" style="right:31px;top:320.5px;font-size:12px;line-height:12px;height:12px;color:#f6f6f6;background:rgba(112,112,112,.8);padding:1px 0 1px 2px;height:14px;"><span class="j" style="width:36px;transform:scaleX(.9281);margin-right:-2.59px">水多め</span></div>
<div class="a t" style="right:31px;top:344.5px;font-size:12px;line-height:12px;height:12px;color:#f6f6f6;background:rgba(112,112,112,.8);padding:1px 0 1px 2px;height:14px;"><span class="j" style="width:72px;transform:scaleX(.8814);margin-right:-8.54px">にじみ縁水彩</span></div>
<div class="a t" style="right:31px;top:368.5px;font-size:12px;line-height:12px;height:12px;color:#f6f6f6;background:rgba(112,112,112,.8);padding:1px 0 1px 2px;height:14px;"><span class="j">紙質強調</span></div>
<div class="a t" style="right:31px;top:392.5px;font-size:12px;line-height:12px;height:12px;color:#f6f6f6;background:rgba(112,112,112,.8);padding:1px 0 1px 2px;height:14px;"><span class="j" style="width:84px;transform:scaleX(.7852);margin-right:-18.04px">重ねムラブラシ</span></div>
<div class="a t" style="right:31px;top:416.5px;font-size:12px;line-height:12px;height:12px;color:#f6f6f6;background:rgba(112,112,112,.8);padding:1px 0 1px 2px;height:14px;"><span class="j">透明水彩</span> 2</div>
<div class="a t" style="left:1217.5px;top:466.5px;font-size:11.5px;line-height:11.5px;height:11.5px;color:#cecece;"><span class="j" style="width:92px;transform:scaleX(.5655);margin-right:-39.97px">ツールプロパティ</span>[<span class="j" style="width:46px;transform:scaleX(.81);margin-right:-8.74px">濃い鉛筆</span> 2]</div>
<div class="a t" style="left:1174px;top:483.5px;font-size:12.5px;line-height:12.5px;height:12.5px;color:#fcfcfc;text-shadow:0 0 1px #666;"><span class="j" style="width:50px;transform:scaleX(.955);margin-right:-2.25px">濃い鉛筆</span> 2</div>
<div class="a t" style="left:1189.5px;top:525.5px;font-size:12.5px;line-height:12.5px;height:12.5px;color:#f6f6f6;"><span class="j" style="width:75px;transform:scaleX(.7097);margin-right:-21.77px">ブラシサイズ</span></div>
<div class="a t" style="left:1287.7px;top:531.5px;font-size:12.5px;line-height:12.5px;height:12.5px;color:#f6f6f6;transform:scaleX(0.67);transform-origin:0 0;">17.1</div>
<div class="a t" style="left:1189.5px;top:555.5px;font-size:12px;line-height:12px;height:12px;color:#f6f6f6;"><span class="j" style="width:24px;transform:scaleX(.7788);margin-right:-5.31px">硬さ</span></div>
<div class="a t" style="left:1217.3px;top:601.5px;font-size:12px;line-height:12px;height:12px;color:#e4e4e4;"><span class="j" style="width:36px;transform:scaleX(.5283);margin-right:-16.98px">カラー</span></div>
<div class="a t" style="left:1241.5px;top:752px;font-size:11px;line-height:11px;height:11px;color:#f4f4f4;transform:scaleX(.8);transform-origin:0 0;">0</div>
<div class="a t" style="left:1273.5px;top:752px;font-size:11px;line-height:11px;height:11px;color:#f4f4f4;transform:scaleX(.8);transform-origin:0 0;">0</div>
<div class="a t" style="left:1305.5px;top:752px;font-size:11px;line-height:11px;height:11px;color:#f4f4f4;transform:scaleX(.8);transform-origin:0 0;">0</div>
</body></html>
